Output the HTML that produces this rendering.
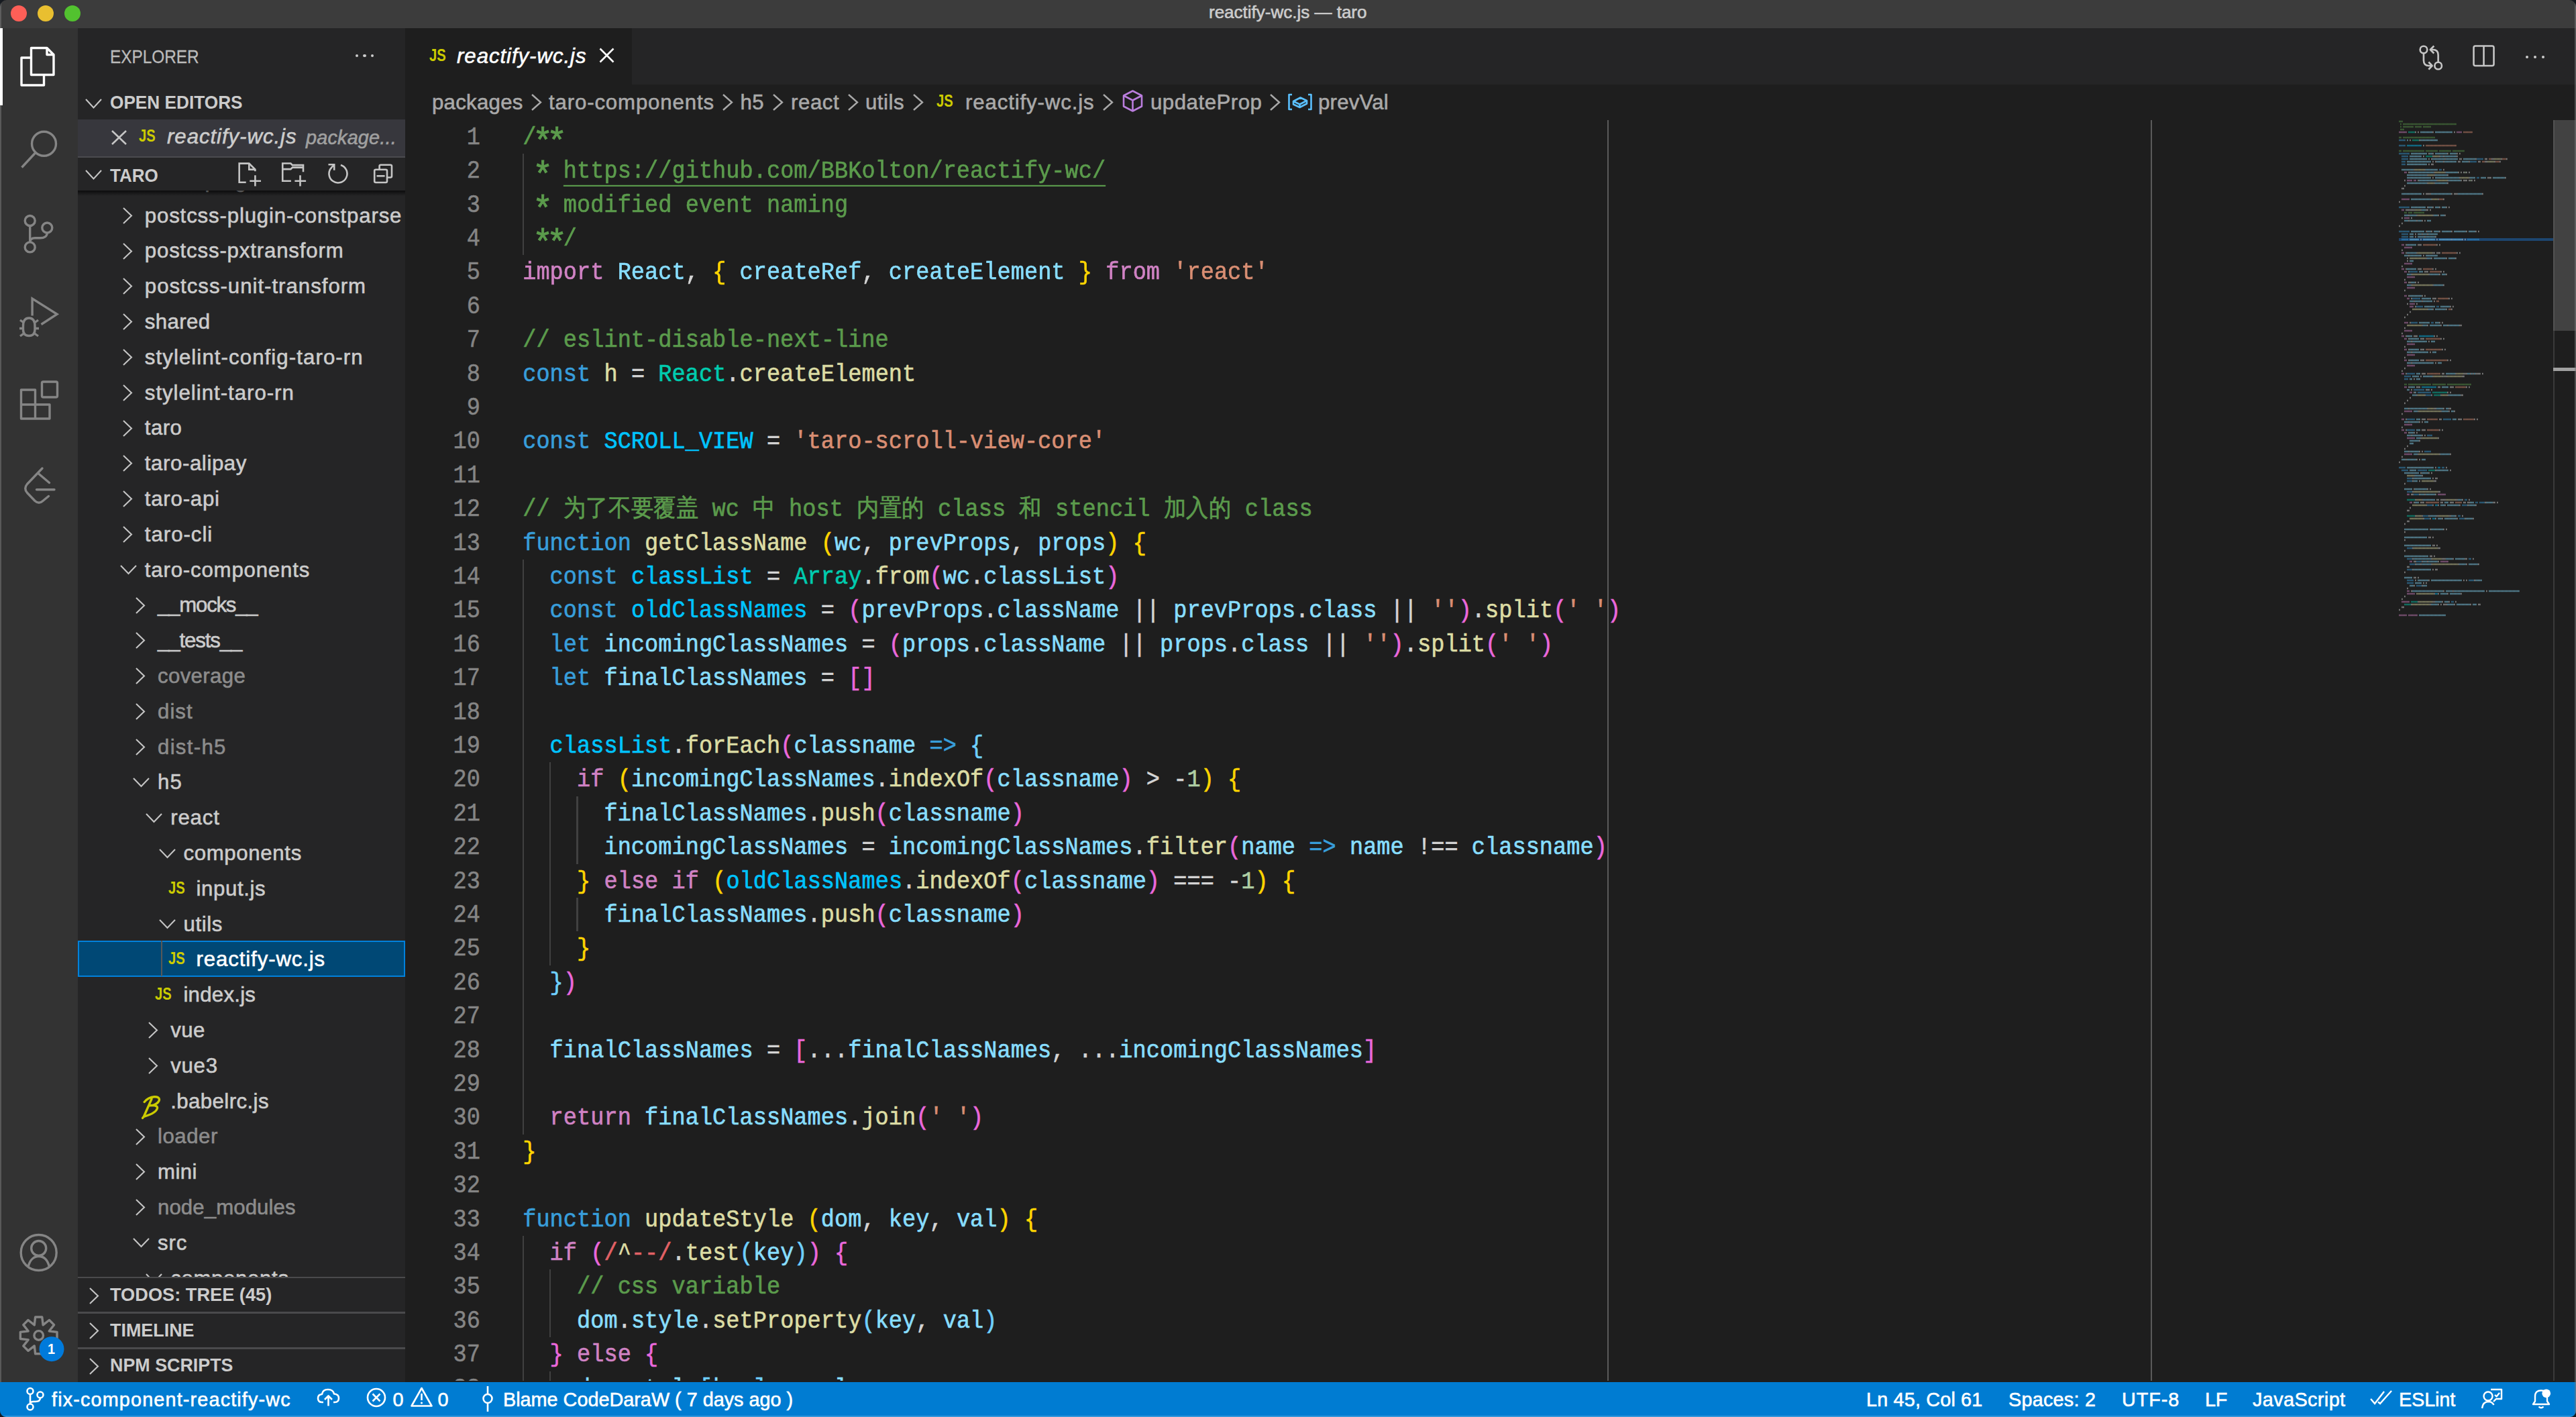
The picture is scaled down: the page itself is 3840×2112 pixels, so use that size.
<!DOCTYPE html>
<html><head><meta charset="utf-8"><style>
html,body{margin:0;padding:0;background:#161a20;}
#root{position:relative;width:3840px;height:2112px;overflow:hidden;background:#1e1e1e;font-family:'Liberation Sans', sans-serif;border-radius:10px 10px 9px 9px;}
</style></head><body><div id="root">
<div style="position:absolute;left:0.00px;top:0.00px;width:3840.00px;height:42.00px;background:#3c3c3c;"></div>
<div style="position:absolute;left:0.00px;top:42.00px;width:116.00px;height:2018.00px;background:#333333;"></div>
<div style="position:absolute;left:116.00px;top:42.00px;width:488.00px;height:2018.00px;background:#252526;"></div>
<div style="position:absolute;left:604.00px;top:42.00px;width:3236.00px;height:2018.00px;background:#1e1e1e;"></div>
<div style="position:absolute;left:0.00px;top:2060.00px;width:3840.00px;height:52.00px;background:#007cd2;"></div>
<div style="position:absolute;left:0.00px;top:0.00px;width:2.00px;height:2060.00px;background:rgba(120,120,120,0.55);"></div>
<div style="position:absolute;left:16px;top:8px;width:24px;height:24px;border-radius:50%;background:#fe5f57"></div>
<div style="position:absolute;left:56px;top:8px;width:24px;height:24px;border-radius:50%;background:#e9bf30"></div>
<div style="position:absolute;left:96px;top:8px;width:24px;height:24px;border-radius:50%;background:#52c22f"></div>
<div style="position:absolute;left:1802.00px;top:3.76px;font-family:'Liberation Sans', sans-serif;font-size:26px;line-height:29.05px;color:#cccccc;font-weight:normal;font-style:normal;letter-spacing:0.000px;white-space:pre;;-webkit-text-stroke:0.6px">reactify-wc.js — taro</div>
<div style="position:absolute;left:0.00px;top:42.00px;width:4.00px;height:115.00px;background:#ffffff;"></div>
<svg style="position:absolute;left:0.00px;top:42.00px;" width="116" height="2018" viewBox="0 42 116 2018">
<g fill="none" stroke="#ffffff" stroke-width="3.4" stroke-linejoin="round">
<path d="M46.5 71.5 H70 L80 81.5 V111.5 H46.5 Z"/><path d="M70 71.5 V81.5 H80"/>
<path d="M46.5 86 H32 V127 H65.5 V111.5"/></g>
<g fill="none" stroke="#858585" stroke-width="3.4">
<circle cx="65.5" cy="214.2" r="18"/><path d="M52.5 228 L32.5 249.5"/>
<circle cx="44.7" cy="329" r="7.5"/><circle cx="70.3" cy="339.5" r="7.5"/><circle cx="44.7" cy="368.4" r="7.5"/>
<path d="M44.7 336.5 V361"/><path d="M70.3 347 C70.3 352 66 354.8 60 354.8 H52 C47 354.8 44.7 357 44.7 361"/>
</g>
<g fill="none" stroke="#858585" stroke-width="3.4" stroke-linejoin="miter">
<path d="M48.1 470.5 V445 L85 468.2 L61.5 483.5"/>
<path d="M34.5 486 Q34.5 474 43.2 474 Q52 474 52 486 V491 Q52 500.5 43.2 500.5 Q34.5 500.5 34.5 491 Z"/>
<path d="M29 489.5 H34.5 M52 489.5 H58 M30 477 L35.5 481 M57 477 L51.5 481 M30 501 L35.5 497 M57 501 L51.5 497"/>
</g>
<g fill="none" stroke="#858585" stroke-width="3.4" stroke-linejoin="round">
<path d="M31.5 581 H52.5 V603 H74 V624 H31.5 Z"/><path d="M31.5 603 H52.5 V624"/>
<rect x="62.5" y="569" width="23" height="23" rx="2"/>
</g>
<g fill="none" stroke="#858585" stroke-width="3.4" stroke-linecap="round" stroke-linejoin="round">
<path d="M63 698 L40.5 721.5 Q35 728 40.5 734.5 L52 746.5 Q58 752 64 746.5 L72.5 739.5"/>
<path d="M57.5 706 L73.5 719.5"/><path d="M54.5 729.7 H81"/>
</g>
<g fill="none" stroke="#858585" stroke-width="3.4">
<circle cx="57.7" cy="1867" r="26.5"/><circle cx="57.7" cy="1860.5" r="11"/>
<path d="M42 1888 C45 1876 52 1872.5 57.7 1872.5 C63.5 1872.5 70.5 1876 73.5 1888"/>
</g>
<g fill="none" stroke="#858585" stroke-width="3.4" stroke-linejoin="round">
<polygon points="52.63,1963.07 62.77,1963.07 64.13,1974.88 73.45,1967.49 80.61,1974.65 73.22,1983.97 85.03,1985.33 85.03,1995.47 73.22,1996.83 80.61,2006.15 73.45,2013.31 64.13,2005.92 62.77,2017.73 52.63,2017.73 51.27,2005.92 41.95,2013.31 34.79,2006.15 42.18,1996.83 30.37,1995.47 30.37,1985.33 42.18,1983.97 34.79,1974.65 41.95,1967.49 51.27,1974.88"/><circle cx="57.7" cy="1990.4" r="6.8"/></g>
<circle cx="77" cy="2010.7" r="18.5" fill="#007adb"/></svg>
<div style="position:absolute;left:70.50px;top:1998.58px;font-family:'Liberation Sans', sans-serif;font-size:22px;line-height:24.58px;color:#ffffff;font-weight:bold;font-style:normal;letter-spacing:0.000px;white-space:pre;transform:scaleX(0.9);transform-origin:left">1</div>
<div style="position:absolute;left:164.00px;top:68.85px;font-family:'Liberation Sans', sans-serif;font-size:28px;line-height:31.28px;color:#bbbbbb;font-weight:normal;font-style:normal;letter-spacing:0.000px;white-space:pre;transform:scaleX(0.87);transform-origin:left;-webkit-text-stroke:0.3px">EXPLORER</div>
<div style="position:absolute;left:529.5px;top:80.5px;width:4.8px;height:4.8px;border-radius:50%;background:#cccccc"></div>
<div style="position:absolute;left:541.0px;top:80.5px;width:4.8px;height:4.8px;border-radius:50%;background:#cccccc"></div>
<div style="position:absolute;left:552.5px;top:80.5px;width:4.8px;height:4.8px;border-radius:50%;background:#cccccc"></div>
<svg style="position:absolute;left:126.00px;top:145.50px;" width="27" height="16.5" viewBox="0 0 27 16.5"><path d="M2 2 L13.5 14.5 L25 2" fill="none" stroke="#c5c5c5" stroke-width="2.1"/></svg>
<div style="position:absolute;left:164.00px;top:136.95px;font-family:'Liberation Sans', sans-serif;font-size:28px;line-height:31.28px;color:#cccccc;font-weight:bold;font-style:normal;letter-spacing:0.000px;white-space:pre;transform:scaleX(0.936);transform-origin:left">OPEN EDITORS</div>
<div style="position:absolute;left:116.00px;top:178.00px;width:488.00px;height:55.00px;background:#37373d;"></div>
<div style="position:absolute;left:116.00px;top:232.50px;width:488.00px;height:2.00px;background:#4b4b4f;"></div>
<svg style="position:absolute;left:165.00px;top:193.00px;" width="25" height="24" viewBox="0 0 25 24"><path d="M2 2 L23 22 M23 2 L2 22" fill="none" stroke="#c5c5c5" stroke-width="2.6"/></svg>
<div style="position:absolute;left:207.00px;top:187.99px;font-family:'Liberation Sans', sans-serif;font-size:25.970000000000002px;line-height:29.01px;color:#cbcb00;font-weight:bold;font-style:normal;letter-spacing:0.000px;white-space:pre;transform:scaleX(0.78);transform-origin:left">JS</div>
<div style="position:absolute;left:249.00px;top:186.75px;font-family:'Liberation Sans', sans-serif;font-size:31.2px;line-height:34.86px;color:#cccccc;font-weight:normal;font-style:italic;letter-spacing:0.950px;white-space:pre;;-webkit-text-stroke:0.6px">reactify-wc.js</div>
<div style="position:absolute;left:456.00px;top:188.93px;font-family:'Liberation Sans', sans-serif;font-size:28.8px;line-height:32.18px;color:#a0a0a0;font-weight:normal;font-style:italic;letter-spacing:0.200px;white-space:pre;;-webkit-text-stroke:0.6px">package...</div>
<div style="position:absolute;left:116.00px;top:234.50px;width:488.00px;height:49.50px;background:#252526;"></div>
<svg style="position:absolute;left:126.00px;top:252.00px;" width="27" height="16.5" viewBox="0 0 27 16.5"><path d="M2 2 L13.5 14.5 L25 2" fill="none" stroke="#c5c5c5" stroke-width="2.1"/></svg>
<div style="position:absolute;left:164.00px;top:245.65px;font-family:'Liberation Sans', sans-serif;font-size:28px;line-height:31.28px;color:#cccccc;font-weight:bold;font-style:normal;letter-spacing:0.000px;white-space:pre;transform:scaleX(0.93);transform-origin:left">TARO</div>
<svg style="position:absolute;left:350.00px;top:238.00px;" width="44" height="44" viewBox="0 0 44 44"><g fill="none" stroke="#c5c5c5" stroke-width="2.6" stroke-linejoin="miter">
<path d="M16.7 33.8 H6.65 V5.6 H21.3 L30.4 14.6 V17.2"/><path d="M21.3 5.6 V14.6 H30.4"/><path d="M22.3 31.8 H39 M30.4 23.2 V39.4"/></g></svg>
<svg style="position:absolute;left:416.00px;top:238.00px;" width="44" height="44" viewBox="0 0 44 44"><g fill="none" stroke="#c5c5c5" stroke-width="2.6" stroke-linejoin="miter">
<path d="M17.9 31.8 H5.25 V5.57 H17.4 L19.9 8.1 H36 V18.2"/><path d="M5.25 14.15 H17.4 L19.9 11.63 H36"/><path d="M23.4 31.8 H40.1 M31.5 23.2 V39.4"/></g></svg>
<svg style="position:absolute;left:484.00px;top:238.00px;" width="40" height="40" viewBox="0 0 40 40"><g fill="none" stroke="#c5c5c5" stroke-width="2.6" stroke-linejoin="miter">
<path d="M23.9 8 A13.5 13.5 0 1 1 10.6 11.2 L14.2 7.3"/><path d="M5.5 7.3 H14.2 V15.8"/></g></svg>
<svg style="position:absolute;left:552.00px;top:238.00px;" width="40" height="40" viewBox="0 0 40 40"><g fill="none" stroke="#c5c5c5" stroke-width="2.6" stroke-linejoin="round">
<rect x="6.2" y="14.7" width="18.8" height="19.3" rx="2"/><path d="M13.6 14.7 V9.7 Q13.6 7.7 15.6 7.7 H30 Q32 7.7 32 9.7 V24.5 Q32 26.5 30 26.5 H25"/><path d="M9.5 24.3 H21.6"/></g></svg>
<div style="position:absolute;left:116px;top:284px;width:488px;height:1618.6px;overflow:hidden">
<svg style="position:absolute;left:66.00px;top:-29.10px;" width="17" height="27" viewBox="0 0 17 27"><path d="M2 2 L14 13.5 L2 25" fill="none" stroke="#c5c5c5" stroke-width="2.1"/></svg>
<div style="position:absolute;left:99.80px;top:-32.15px;font-family:'Liberation Sans', sans-serif;font-size:31.2px;line-height:34.86px;color:#cccccc;font-weight:normal;font-style:normal;letter-spacing:0.941px;white-space:pre;;-webkit-text-stroke:0.6px">eslint-plugin-taro</div>
<svg style="position:absolute;left:66.00px;top:23.70px;" width="17" height="27" viewBox="0 0 17 27"><path d="M2 2 L14 13.5 L2 25" fill="none" stroke="#c5c5c5" stroke-width="2.1"/></svg>
<div style="position:absolute;left:99.80px;top:20.65px;font-family:'Liberation Sans', sans-serif;font-size:31.2px;line-height:34.86px;color:#cccccc;font-weight:normal;font-style:normal;letter-spacing:0.848px;white-space:pre;;-webkit-text-stroke:0.6px">postcss-plugin-constparse</div>
<svg style="position:absolute;left:66.00px;top:76.50px;" width="17" height="27" viewBox="0 0 17 27"><path d="M2 2 L14 13.5 L2 25" fill="none" stroke="#c5c5c5" stroke-width="2.1"/></svg>
<div style="position:absolute;left:99.80px;top:73.45px;font-family:'Liberation Sans', sans-serif;font-size:31.2px;line-height:34.86px;color:#cccccc;font-weight:normal;font-style:normal;letter-spacing:0.839px;white-space:pre;;-webkit-text-stroke:0.6px">postcss-pxtransform</div>
<svg style="position:absolute;left:66.00px;top:129.30px;" width="17" height="27" viewBox="0 0 17 27"><path d="M2 2 L14 13.5 L2 25" fill="none" stroke="#c5c5c5" stroke-width="2.1"/></svg>
<div style="position:absolute;left:99.80px;top:126.25px;font-family:'Liberation Sans', sans-serif;font-size:31.2px;line-height:34.86px;color:#cccccc;font-weight:normal;font-style:normal;letter-spacing:0.991px;white-space:pre;;-webkit-text-stroke:0.6px">postcss-unit-transform</div>
<svg style="position:absolute;left:66.00px;top:182.10px;" width="17" height="27" viewBox="0 0 17 27"><path d="M2 2 L14 13.5 L2 25" fill="none" stroke="#c5c5c5" stroke-width="2.1"/></svg>
<div style="position:absolute;left:99.80px;top:179.05px;font-family:'Liberation Sans', sans-serif;font-size:31.2px;line-height:34.86px;color:#cccccc;font-weight:normal;font-style:normal;letter-spacing:0.371px;white-space:pre;;-webkit-text-stroke:0.6px">shared</div>
<svg style="position:absolute;left:66.00px;top:234.90px;" width="17" height="27" viewBox="0 0 17 27"><path d="M2 2 L14 13.5 L2 25" fill="none" stroke="#c5c5c5" stroke-width="2.1"/></svg>
<div style="position:absolute;left:99.80px;top:231.85px;font-family:'Liberation Sans', sans-serif;font-size:31.2px;line-height:34.86px;color:#cccccc;font-weight:normal;font-style:normal;letter-spacing:1.085px;white-space:pre;;-webkit-text-stroke:0.6px">stylelint-config-taro-rn</div>
<svg style="position:absolute;left:66.00px;top:287.70px;" width="17" height="27" viewBox="0 0 17 27"><path d="M2 2 L14 13.5 L2 25" fill="none" stroke="#c5c5c5" stroke-width="2.1"/></svg>
<div style="position:absolute;left:99.80px;top:284.65px;font-family:'Liberation Sans', sans-serif;font-size:31.2px;line-height:34.86px;color:#cccccc;font-weight:normal;font-style:normal;letter-spacing:0.985px;white-space:pre;;-webkit-text-stroke:0.6px">stylelint-taro-rn</div>
<svg style="position:absolute;left:66.00px;top:340.50px;" width="17" height="27" viewBox="0 0 17 27"><path d="M2 2 L14 13.5 L2 25" fill="none" stroke="#c5c5c5" stroke-width="2.1"/></svg>
<div style="position:absolute;left:99.80px;top:337.45px;font-family:'Liberation Sans', sans-serif;font-size:31.2px;line-height:34.86px;color:#cccccc;font-weight:normal;font-style:normal;letter-spacing:0.438px;white-space:pre;;-webkit-text-stroke:0.6px">taro</div>
<svg style="position:absolute;left:66.00px;top:393.30px;" width="17" height="27" viewBox="0 0 17 27"><path d="M2 2 L14 13.5 L2 25" fill="none" stroke="#c5c5c5" stroke-width="2.1"/></svg>
<div style="position:absolute;left:99.80px;top:390.25px;font-family:'Liberation Sans', sans-serif;font-size:31.2px;line-height:34.86px;color:#cccccc;font-weight:normal;font-style:normal;letter-spacing:0.598px;white-space:pre;;-webkit-text-stroke:0.6px">taro-alipay</div>
<svg style="position:absolute;left:66.00px;top:446.10px;" width="17" height="27" viewBox="0 0 17 27"><path d="M2 2 L14 13.5 L2 25" fill="none" stroke="#c5c5c5" stroke-width="2.1"/></svg>
<div style="position:absolute;left:99.80px;top:443.05px;font-family:'Liberation Sans', sans-serif;font-size:31.2px;line-height:34.86px;color:#cccccc;font-weight:normal;font-style:normal;letter-spacing:0.781px;white-space:pre;;-webkit-text-stroke:0.6px">taro-api</div>
<svg style="position:absolute;left:66.00px;top:498.90px;" width="17" height="27" viewBox="0 0 17 27"><path d="M2 2 L14 13.5 L2 25" fill="none" stroke="#c5c5c5" stroke-width="2.1"/></svg>
<div style="position:absolute;left:99.80px;top:495.85px;font-family:'Liberation Sans', sans-serif;font-size:31.2px;line-height:34.86px;color:#cccccc;font-weight:normal;font-style:normal;letter-spacing:0.978px;white-space:pre;;-webkit-text-stroke:0.6px">taro-cli</div>
<svg style="position:absolute;left:62.00px;top:557.20px;" width="27" height="17" viewBox="0 0 27 17"><path d="M2 2 L13.5 14 L25 2" fill="none" stroke="#c5c5c5" stroke-width="2.1"/></svg>
<div style="position:absolute;left:99.80px;top:548.65px;font-family:'Liberation Sans', sans-serif;font-size:31.2px;line-height:34.86px;color:#cccccc;font-weight:normal;font-style:normal;letter-spacing:0.818px;white-space:pre;;-webkit-text-stroke:0.6px">taro-components</div>
<svg style="position:absolute;left:85.20px;top:604.50px;" width="17" height="27" viewBox="0 0 17 27"><path d="M2 2 L14 13.5 L2 25" fill="none" stroke="#c5c5c5" stroke-width="2.1"/></svg>
<div style="position:absolute;left:119.00px;top:601.45px;font-family:'Liberation Sans', sans-serif;font-size:31.2px;line-height:34.86px;color:#cccccc;font-weight:normal;font-style:normal;letter-spacing:-1.222px;white-space:pre;;-webkit-text-stroke:0.6px">__mocks__</div>
<svg style="position:absolute;left:85.20px;top:657.30px;" width="17" height="27" viewBox="0 0 17 27"><path d="M2 2 L14 13.5 L2 25" fill="none" stroke="#c5c5c5" stroke-width="2.1"/></svg>
<div style="position:absolute;left:119.00px;top:654.25px;font-family:'Liberation Sans', sans-serif;font-size:31.2px;line-height:34.86px;color:#cccccc;font-weight:normal;font-style:normal;letter-spacing:-1.117px;white-space:pre;;-webkit-text-stroke:0.6px">__tests__</div>
<svg style="position:absolute;left:85.20px;top:710.10px;" width="17" height="27" viewBox="0 0 17 27"><path d="M2 2 L14 13.5 L2 25" fill="none" stroke="#c5c5c5" stroke-width="2.1"/></svg>
<div style="position:absolute;left:119.00px;top:707.05px;font-family:'Liberation Sans', sans-serif;font-size:31.2px;line-height:34.86px;color:#8c8c8c;font-weight:normal;font-style:normal;letter-spacing:0.348px;white-space:pre;;-webkit-text-stroke:0.6px">coverage</div>
<svg style="position:absolute;left:85.20px;top:762.90px;" width="17" height="27" viewBox="0 0 17 27"><path d="M2 2 L14 13.5 L2 25" fill="none" stroke="#c5c5c5" stroke-width="2.1"/></svg>
<div style="position:absolute;left:119.00px;top:759.85px;font-family:'Liberation Sans', sans-serif;font-size:31.2px;line-height:34.86px;color:#8c8c8c;font-weight:normal;font-style:normal;letter-spacing:1.038px;white-space:pre;;-webkit-text-stroke:0.6px">dist</div>
<svg style="position:absolute;left:85.20px;top:815.70px;" width="17" height="27" viewBox="0 0 17 27"><path d="M2 2 L14 13.5 L2 25" fill="none" stroke="#c5c5c5" stroke-width="2.1"/></svg>
<div style="position:absolute;left:119.00px;top:812.65px;font-family:'Liberation Sans', sans-serif;font-size:31.2px;line-height:34.86px;color:#8c8c8c;font-weight:normal;font-style:normal;letter-spacing:1.299px;white-space:pre;;-webkit-text-stroke:0.6px">dist-h5</div>
<svg style="position:absolute;left:81.20px;top:874.00px;" width="27" height="17" viewBox="0 0 27 17"><path d="M2 2 L13.5 14 L25 2" fill="none" stroke="#c5c5c5" stroke-width="2.1"/></svg>
<div style="position:absolute;left:119.00px;top:865.45px;font-family:'Liberation Sans', sans-serif;font-size:31.2px;line-height:34.86px;color:#cccccc;font-weight:normal;font-style:normal;letter-spacing:1.148px;white-space:pre;;-webkit-text-stroke:0.6px">h5</div>
<svg style="position:absolute;left:100.40px;top:926.80px;" width="27" height="17" viewBox="0 0 27 17"><path d="M2 2 L13.5 14 L25 2" fill="none" stroke="#c5c5c5" stroke-width="2.1"/></svg>
<div style="position:absolute;left:138.20px;top:918.25px;font-family:'Liberation Sans', sans-serif;font-size:31.2px;line-height:34.86px;color:#cccccc;font-weight:normal;font-style:normal;letter-spacing:0.831px;white-space:pre;;-webkit-text-stroke:0.6px">react</div>
<svg style="position:absolute;left:119.60px;top:979.60px;" width="27" height="17" viewBox="0 0 27 17"><path d="M2 2 L13.5 14 L25 2" fill="none" stroke="#c5c5c5" stroke-width="2.1"/></svg>
<div style="position:absolute;left:157.40px;top:971.05px;font-family:'Liberation Sans', sans-serif;font-size:31.2px;line-height:34.86px;color:#cccccc;font-weight:normal;font-style:normal;letter-spacing:0.659px;white-space:pre;;-webkit-text-stroke:0.6px">components</div>
<div style="position:absolute;left:134.60px;top:1024.86px;font-family:'Liberation Sans', sans-serif;font-size:26px;line-height:29.05px;color:#cbcb00;font-weight:bold;font-style:normal;letter-spacing:0.000px;white-space:pre;transform:scaleX(0.78);transform-origin:left">JS</div>
<div style="position:absolute;left:176.60px;top:1023.85px;font-family:'Liberation Sans', sans-serif;font-size:31.2px;line-height:34.86px;color:#cccccc;font-weight:normal;font-style:normal;letter-spacing:0.596px;white-space:pre;;-webkit-text-stroke:0.6px">input.js</div>
<svg style="position:absolute;left:119.60px;top:1085.20px;" width="27" height="17" viewBox="0 0 27 17"><path d="M2 2 L13.5 14 L25 2" fill="none" stroke="#c5c5c5" stroke-width="2.1"/></svg>
<div style="position:absolute;left:157.40px;top:1076.65px;font-family:'Liberation Sans', sans-serif;font-size:31.2px;line-height:34.86px;color:#cccccc;font-weight:normal;font-style:normal;letter-spacing:0.646px;white-space:pre;;-webkit-text-stroke:0.6px">utils</div>
<div style="position:absolute;left:0px;top:1118.00px;width:488px;height:53.80px;box-sizing:border-box;background:#004875;border:2.4px solid #0081db"></div>
<div style="position:absolute;left:134.60px;top:1130.46px;font-family:'Liberation Sans', sans-serif;font-size:26px;line-height:29.05px;color:#cbcb00;font-weight:bold;font-style:normal;letter-spacing:0.000px;white-space:pre;transform:scaleX(0.78);transform-origin:left">JS</div>
<div style="position:absolute;left:176.60px;top:1129.45px;font-family:'Liberation Sans', sans-serif;font-size:31.2px;line-height:34.86px;color:#ffffff;font-weight:normal;font-style:normal;letter-spacing:0.877px;white-space:pre;;-webkit-text-stroke:0.6px">reactify-wc.js</div>
<div style="position:absolute;left:115.40px;top:1183.26px;font-family:'Liberation Sans', sans-serif;font-size:26px;line-height:29.05px;color:#cbcb00;font-weight:bold;font-style:normal;letter-spacing:0.000px;white-space:pre;transform:scaleX(0.78);transform-origin:left">JS</div>
<div style="position:absolute;left:157.40px;top:1182.25px;font-family:'Liberation Sans', sans-serif;font-size:31.2px;line-height:34.86px;color:#cccccc;font-weight:normal;font-style:normal;letter-spacing:0.256px;white-space:pre;;-webkit-text-stroke:0.6px">index.js</div>
<svg style="position:absolute;left:104.40px;top:1238.10px;" width="17" height="27" viewBox="0 0 17 27"><path d="M2 2 L14 13.5 L2 25" fill="none" stroke="#c5c5c5" stroke-width="2.1"/></svg>
<div style="position:absolute;left:138.20px;top:1235.05px;font-family:'Liberation Sans', sans-serif;font-size:31.2px;line-height:34.86px;color:#cccccc;font-weight:normal;font-style:normal;letter-spacing:0.401px;white-space:pre;;-webkit-text-stroke:0.6px">vue</div>
<svg style="position:absolute;left:104.40px;top:1290.90px;" width="17" height="27" viewBox="0 0 17 27"><path d="M2 2 L14 13.5 L2 25" fill="none" stroke="#c5c5c5" stroke-width="2.1"/></svg>
<div style="position:absolute;left:138.20px;top:1287.85px;font-family:'Liberation Sans', sans-serif;font-size:31.2px;line-height:34.86px;color:#cccccc;font-weight:normal;font-style:normal;letter-spacing:0.740px;white-space:pre;;-webkit-text-stroke:0.6px">vue3</div>
<svg style="position:absolute;left:95.00px;top:1349.00px;" width="30" height="36" viewBox="0 0 30 36"><g fill="none" stroke="#cbcb00" stroke-width="3.4" stroke-linecap="round" stroke-linejoin="round"><path d="M4.2 9.5 Q10 2.5 19 1.8 Q26.5 1.5 26.5 6 Q26 11 17 14.5 Q24 15 23.5 18.5 Q22 26 4 31"/><path d="M15 5 L3.5 31 L1.5 33.5"/><path d="M12.5 14.8 L17 14.5"/></g></svg>
<div style="position:absolute;left:138.20px;top:1340.65px;font-family:'Liberation Sans', sans-serif;font-size:31.2px;line-height:34.86px;color:#cccccc;font-weight:normal;font-style:normal;letter-spacing:0.422px;white-space:pre;;-webkit-text-stroke:0.6px">.babelrc.js</div>
<svg style="position:absolute;left:85.20px;top:1396.50px;" width="17" height="27" viewBox="0 0 17 27"><path d="M2 2 L14 13.5 L2 25" fill="none" stroke="#c5c5c5" stroke-width="2.1"/></svg>
<div style="position:absolute;left:119.00px;top:1393.45px;font-family:'Liberation Sans', sans-serif;font-size:31.2px;line-height:34.86px;color:#8c8c8c;font-weight:normal;font-style:normal;letter-spacing:0.533px;white-space:pre;;-webkit-text-stroke:0.6px">loader</div>
<svg style="position:absolute;left:85.20px;top:1449.30px;" width="17" height="27" viewBox="0 0 17 27"><path d="M2 2 L14 13.5 L2 25" fill="none" stroke="#c5c5c5" stroke-width="2.1"/></svg>
<div style="position:absolute;left:119.00px;top:1446.25px;font-family:'Liberation Sans', sans-serif;font-size:31.2px;line-height:34.86px;color:#cccccc;font-weight:normal;font-style:normal;letter-spacing:0.428px;white-space:pre;;-webkit-text-stroke:0.6px">mini</div>
<svg style="position:absolute;left:85.20px;top:1502.10px;" width="17" height="27" viewBox="0 0 17 27"><path d="M2 2 L14 13.5 L2 25" fill="none" stroke="#c5c5c5" stroke-width="2.1"/></svg>
<div style="position:absolute;left:119.00px;top:1499.05px;font-family:'Liberation Sans', sans-serif;font-size:31.2px;line-height:34.86px;color:#8c8c8c;font-weight:normal;font-style:normal;letter-spacing:0.083px;white-space:pre;;-webkit-text-stroke:0.6px">node_modules</div>
<svg style="position:absolute;left:81.20px;top:1560.40px;" width="27" height="17" viewBox="0 0 27 17"><path d="M2 2 L13.5 14 L25 2" fill="none" stroke="#c5c5c5" stroke-width="2.1"/></svg>
<div style="position:absolute;left:119.00px;top:1551.85px;font-family:'Liberation Sans', sans-serif;font-size:31.2px;line-height:34.86px;color:#cccccc;font-weight:normal;font-style:normal;letter-spacing:0.874px;white-space:pre;;-webkit-text-stroke:0.6px">src</div>
<svg style="position:absolute;left:100.40px;top:1613.20px;" width="27" height="17" viewBox="0 0 27 17"><path d="M2 2 L13.5 14 L25 2" fill="none" stroke="#c5c5c5" stroke-width="2.1"/></svg>
<div style="position:absolute;left:138.20px;top:1604.65px;font-family:'Liberation Sans', sans-serif;font-size:31.2px;line-height:34.86px;color:#cccccc;font-weight:normal;font-style:normal;letter-spacing:0.659px;white-space:pre;;-webkit-text-stroke:0.6px">components</div>
<div style="position:absolute;left:124.00px;top:1118.00px;width:2.00px;height:52.80px;background:#585858;"></div>
</div>
<div style="position:absolute;left:116px;top:284px;width:488px;height:8px;background:linear-gradient(#000000aa,#00000000)"></div>
<div style="position:absolute;left:116.00px;top:1902.60px;width:488.00px;height:52.80px;background:#252526;"></div>
<div style="position:absolute;left:116.00px;top:1902.60px;width:488.00px;height:2.40px;background:#4a4a4c;"></div>
<svg style="position:absolute;left:132.00px;top:1917.60px;" width="17" height="27" viewBox="0 0 17 27"><path d="M2 2 L14 13.5 L2 25" fill="none" stroke="#c5c5c5" stroke-width="2.1"/></svg>
<div style="position:absolute;left:164.00px;top:1913.75px;font-family:'Liberation Sans', sans-serif;font-size:28px;line-height:31.28px;color:#cccccc;font-weight:bold;font-style:normal;letter-spacing:0.000px;white-space:pre;transform:scaleX(0.971);transform-origin:left">TODOS: TREE (45)</div>
<div style="position:absolute;left:116.00px;top:1955.40px;width:488.00px;height:52.80px;background:#252526;"></div>
<div style="position:absolute;left:116.00px;top:1955.40px;width:488.00px;height:2.40px;background:#4a4a4c;"></div>
<svg style="position:absolute;left:132.00px;top:1970.40px;" width="17" height="27" viewBox="0 0 17 27"><path d="M2 2 L14 13.5 L2 25" fill="none" stroke="#c5c5c5" stroke-width="2.1"/></svg>
<div style="position:absolute;left:164.00px;top:1966.55px;font-family:'Liberation Sans', sans-serif;font-size:28px;line-height:31.28px;color:#cccccc;font-weight:bold;font-style:normal;letter-spacing:0.000px;white-space:pre;transform:scaleX(0.961);transform-origin:left">TIMELINE</div>
<div style="position:absolute;left:116.00px;top:2008.20px;width:488.00px;height:51.80px;background:#252526;"></div>
<div style="position:absolute;left:116.00px;top:2008.20px;width:488.00px;height:2.40px;background:#4a4a4c;"></div>
<svg style="position:absolute;left:132.00px;top:2023.20px;" width="17" height="27" viewBox="0 0 17 27"><path d="M2 2 L14 13.5 L2 25" fill="none" stroke="#c5c5c5" stroke-width="2.1"/></svg>
<div style="position:absolute;left:164.00px;top:2019.35px;font-family:'Liberation Sans', sans-serif;font-size:28px;line-height:31.28px;color:#cccccc;font-weight:bold;font-style:normal;letter-spacing:0.000px;white-space:pre;transform:scaleX(0.959);transform-origin:left">NPM SCRIPTS</div>
<div style="position:absolute;left:604.00px;top:42.00px;width:3236.00px;height:84.00px;background:#252526;"></div>
<div style="position:absolute;left:604.00px;top:42.00px;width:338.00px;height:84.00px;background:#1e1e1e;"></div>
<div style="position:absolute;left:639.50px;top:67.99px;font-family:'Liberation Sans', sans-serif;font-size:25.970000000000002px;line-height:29.01px;color:#cbcb00;font-weight:bold;font-style:normal;letter-spacing:0.000px;white-space:pre;transform:scaleX(0.78);transform-origin:left">JS</div>
<div style="position:absolute;left:681.00px;top:67.05px;font-family:'Liberation Sans', sans-serif;font-size:31.2px;line-height:34.86px;color:#ffffff;font-weight:normal;font-style:italic;letter-spacing:0.950px;white-space:pre;;-webkit-text-stroke:0.6px">reactify-wc.js</div>
<svg style="position:absolute;left:892.00px;top:70.00px;" width="25" height="25" viewBox="0 0 25 25"><path d="M2.5 2.5 L22.5 22.5 M22.5 2.5 L2.5 22.5" fill="none" stroke="#ffffff" stroke-width="2.6"/></svg>
<svg style="position:absolute;left:3600.00px;top:62.00px;" width="50" height="50" viewBox="0 0 50 50"><g fill="none" stroke="#c5c5c5" stroke-width="2.6" stroke-linejoin="round">
<circle cx="12.9" cy="12" r="5.3"/><circle cx="34.6" cy="36" r="5.3"/>
<path d="M12.9 17.3 V28 Q12.9 36 20.9 36 H25"/><path d="M20.3 30.5 L25.6 36 L20.3 41.5"/>
<path d="M34.6 30.7 V20 Q34.6 12 26.6 12 H23"/><path d="M28.3 6.5 L22.8 12 L28.3 17.5"/></g></svg>
<svg style="position:absolute;left:3680.00px;top:62.00px;" width="44" height="44" viewBox="0 0 44 44"><g fill="none" stroke="#c5c5c5" stroke-width="2.6"><rect x="7.5" y="6.5" width="30" height="29.5" rx="2.5"/><path d="M22.5 6.5 V36"/></g></svg>
<div style="position:absolute;left:3764.5px;top:82.5px;width:4.8px;height:4.8px;border-radius:50%;background:#cccccc"></div>
<div style="position:absolute;left:3776.5px;top:82.5px;width:4.8px;height:4.8px;border-radius:50%;background:#cccccc"></div>
<div style="position:absolute;left:3788.5px;top:82.5px;width:4.8px;height:4.8px;border-radius:50%;background:#cccccc"></div>
<div style="position:absolute;left:644.00px;top:135.65px;font-family:'Liberation Sans', sans-serif;font-size:31.2px;line-height:34.86px;color:#a9a9a9;font-weight:normal;font-style:normal;letter-spacing:0.273px;white-space:pre;;-webkit-text-stroke:0.6px">packages</div>
<div style="position:absolute;left:818.00px;top:135.65px;font-family:'Liberation Sans', sans-serif;font-size:31.2px;line-height:34.86px;color:#a9a9a9;font-weight:normal;font-style:normal;letter-spacing:0.858px;white-space:pre;;-webkit-text-stroke:0.6px">taro-components</div>
<div style="position:absolute;left:1103.50px;top:135.65px;font-family:'Liberation Sans', sans-serif;font-size:31.2px;line-height:34.86px;color:#a9a9a9;font-weight:normal;font-style:normal;letter-spacing:0.448px;white-space:pre;;-webkit-text-stroke:0.6px">h5</div>
<div style="position:absolute;left:1179.00px;top:135.65px;font-family:'Liberation Sans', sans-serif;font-size:31.2px;line-height:34.86px;color:#a9a9a9;font-weight:normal;font-style:normal;letter-spacing:0.591px;white-space:pre;;-webkit-text-stroke:0.6px">react</div>
<div style="position:absolute;left:1290.00px;top:135.65px;font-family:'Liberation Sans', sans-serif;font-size:31.2px;line-height:34.86px;color:#a9a9a9;font-weight:normal;font-style:normal;letter-spacing:0.506px;white-space:pre;;-webkit-text-stroke:0.6px">utils</div>
<svg style="position:absolute;left:790.50px;top:139.00px;" width="18" height="28" viewBox="0 0 18 28"><path d="M2 2 L15 13.5 L2 25" fill="none" stroke="#a9a9a9" stroke-width="2.4"/></svg>
<svg style="position:absolute;left:1076.00px;top:139.00px;" width="18" height="28" viewBox="0 0 18 28"><path d="M2 2 L15 13.5 L2 25" fill="none" stroke="#a9a9a9" stroke-width="2.4"/></svg>
<svg style="position:absolute;left:1150.50px;top:139.00px;" width="18" height="28" viewBox="0 0 18 28"><path d="M2 2 L15 13.5 L2 25" fill="none" stroke="#a9a9a9" stroke-width="2.4"/></svg>
<svg style="position:absolute;left:1262.50px;top:139.00px;" width="18" height="28" viewBox="0 0 18 28"><path d="M2 2 L15 13.5 L2 25" fill="none" stroke="#a9a9a9" stroke-width="2.4"/></svg>
<svg style="position:absolute;left:1360.00px;top:139.00px;" width="18" height="28" viewBox="0 0 18 28"><path d="M2 2 L15 13.5 L2 25" fill="none" stroke="#a9a9a9" stroke-width="2.4"/></svg>
<div style="position:absolute;left:1396.00px;top:136.49px;font-family:'Liberation Sans', sans-serif;font-size:25.970000000000002px;line-height:29.01px;color:#cbcb00;font-weight:bold;font-style:normal;letter-spacing:0.000px;white-space:pre;transform:scaleX(0.78);transform-origin:left">JS</div>
<div style="position:absolute;left:1439.00px;top:135.65px;font-family:'Liberation Sans', sans-serif;font-size:31.2px;line-height:34.86px;color:#a9a9a9;font-weight:normal;font-style:normal;letter-spacing:0.877px;white-space:pre;;-webkit-text-stroke:0.6px">reactify-wc.js</div>
<svg style="position:absolute;left:1643.00px;top:139.00px;" width="18" height="28" viewBox="0 0 18 28"><path d="M2 2 L15 13.5 L2 25" fill="none" stroke="#a9a9a9" stroke-width="2.4"/></svg>
<svg style="position:absolute;left:1672.00px;top:133.00px;" width="33" height="35" viewBox="0 0 33 35"><g fill="none" stroke="#ba7ddd" stroke-width="2.6" stroke-linejoin="round">
<path d="M16.5 2.5 L30 9.5 V25.5 L16.5 32.5 L3 25.5 V9.5 Z"/><path d="M3 9.5 L16.5 16.5 L30 9.5 M16.5 16.5 V32.5"/></g></svg>
<div style="position:absolute;left:1715.00px;top:135.65px;font-family:'Liberation Sans', sans-serif;font-size:31.2px;line-height:34.86px;color:#a9a9a9;font-weight:normal;font-style:normal;letter-spacing:0.522px;white-space:pre;;-webkit-text-stroke:0.6px">updateProp</div>
<svg style="position:absolute;left:1892.00px;top:139.00px;" width="18" height="28" viewBox="0 0 18 28"><path d="M2 2 L15 13.5 L2 25" fill="none" stroke="#a9a9a9" stroke-width="2.4"/></svg>
<svg style="position:absolute;left:1919.00px;top:138.00px;" width="38" height="28" viewBox="0 0 38 28"><g fill="none" stroke="#5ac0ff" stroke-width="2.6" stroke-linejoin="round">
<path d="M7 3 H2.5 V25 H7 M31 3 H35.5 V25 H31"/>
<path d="M9 13 L19.5 7.5 L29 12 V16.5 L18.5 22 L9 17.5 Z M9 13 L18.5 17.5 L29 12 M18.5 17.5 V22"/></g></svg>
<div style="position:absolute;left:1965.00px;top:135.65px;font-family:'Liberation Sans', sans-serif;font-size:31.2px;line-height:34.86px;color:#a9a9a9;font-weight:normal;font-style:normal;letter-spacing:0.223px;white-space:pre;;-webkit-text-stroke:0.6px">prevVal</div>
<div style="position:absolute;left:0;top:0;width:3840px;height:2058px;overflow:hidden;pointer-events:none">
<div style="position:absolute;left:2396.00px;top:178.80px;width:2.40px;height:1881.20px;background:#5a5a5a;"></div>
<div style="position:absolute;left:3206.00px;top:178.80px;width:2.40px;height:1881.20px;background:#5a5a5a;"></div>
<div style="position:absolute;left:778.60px;top:229.20px;width:2.20px;height:50.40px;background:#404040;"></div>
<div style="position:absolute;left:778.60px;top:279.60px;width:2.20px;height:50.40px;background:#404040;"></div>
<div style="position:absolute;left:778.60px;top:330.00px;width:2.20px;height:50.40px;background:#404040;"></div>
<div style="position:absolute;left:778.60px;top:834.00px;width:2.20px;height:50.40px;background:#404040;"></div>
<div style="position:absolute;left:778.60px;top:884.40px;width:2.20px;height:50.40px;background:#404040;"></div>
<div style="position:absolute;left:778.60px;top:934.80px;width:2.20px;height:50.40px;background:#404040;"></div>
<div style="position:absolute;left:778.60px;top:985.20px;width:2.20px;height:50.40px;background:#404040;"></div>
<div style="position:absolute;left:778.60px;top:1035.60px;width:2.20px;height:50.40px;background:#404040;"></div>
<div style="position:absolute;left:778.60px;top:1086.00px;width:2.20px;height:50.40px;background:#404040;"></div>
<div style="position:absolute;left:778.60px;top:1136.40px;width:2.20px;height:50.40px;background:#404040;"></div>
<div style="position:absolute;left:778.60px;top:1186.80px;width:2.20px;height:50.40px;background:#404040;"></div>
<div style="position:absolute;left:778.60px;top:1237.20px;width:2.20px;height:50.40px;background:#404040;"></div>
<div style="position:absolute;left:778.60px;top:1287.60px;width:2.20px;height:50.40px;background:#404040;"></div>
<div style="position:absolute;left:778.60px;top:1338.00px;width:2.20px;height:50.40px;background:#404040;"></div>
<div style="position:absolute;left:778.60px;top:1388.40px;width:2.20px;height:50.40px;background:#404040;"></div>
<div style="position:absolute;left:778.60px;top:1438.80px;width:2.20px;height:50.40px;background:#404040;"></div>
<div style="position:absolute;left:778.60px;top:1489.20px;width:2.20px;height:50.40px;background:#404040;"></div>
<div style="position:absolute;left:778.60px;top:1539.60px;width:2.20px;height:50.40px;background:#404040;"></div>
<div style="position:absolute;left:778.60px;top:1590.00px;width:2.20px;height:50.40px;background:#404040;"></div>
<div style="position:absolute;left:778.60px;top:1640.40px;width:2.20px;height:50.40px;background:#404040;"></div>
<div style="position:absolute;left:778.60px;top:1842.00px;width:2.20px;height:50.40px;background:#404040;"></div>
<div style="position:absolute;left:778.60px;top:1892.40px;width:2.20px;height:50.40px;background:#404040;"></div>
<div style="position:absolute;left:778.60px;top:1942.80px;width:2.20px;height:50.40px;background:#404040;"></div>
<div style="position:absolute;left:778.60px;top:1993.20px;width:2.20px;height:50.40px;background:#404040;"></div>
<div style="position:absolute;left:778.60px;top:2043.60px;width:2.20px;height:50.40px;background:#404040;"></div>
<div style="position:absolute;left:819.04px;top:1136.40px;width:2.20px;height:50.40px;background:#404040;"></div>
<div style="position:absolute;left:819.04px;top:1186.80px;width:2.20px;height:50.40px;background:#404040;"></div>
<div style="position:absolute;left:819.04px;top:1237.20px;width:2.20px;height:50.40px;background:#404040;"></div>
<div style="position:absolute;left:819.04px;top:1287.60px;width:2.20px;height:50.40px;background:#404040;"></div>
<div style="position:absolute;left:819.04px;top:1338.00px;width:2.20px;height:50.40px;background:#404040;"></div>
<div style="position:absolute;left:819.04px;top:1388.40px;width:2.20px;height:50.40px;background:#404040;"></div>
<div style="position:absolute;left:819.04px;top:1892.40px;width:2.20px;height:50.40px;background:#404040;"></div>
<div style="position:absolute;left:819.04px;top:1942.80px;width:2.20px;height:50.40px;background:#404040;"></div>
<div style="position:absolute;left:819.04px;top:2043.60px;width:2.20px;height:50.40px;background:#404040;"></div>
<div style="position:absolute;left:859.48px;top:1186.80px;width:2.20px;height:50.40px;background:#404040;"></div>
<div style="position:absolute;left:859.48px;top:1237.20px;width:2.20px;height:50.40px;background:#404040;"></div>
<div style="position:absolute;left:859.48px;top:1338.00px;width:2.20px;height:50.40px;background:#404040;"></div>
<div style="position:absolute;left:600px;width:116px;text-align:right;top:186.83px;font-family:'Liberation Mono', monospace;font-size:33.6px;line-height:38.06px;color:#858585;letter-spacing:0.057px;-webkit-text-stroke:0.5px;transform:scaleY(1.1);transform-origin:0 27.97px">1</div>
<div style="position:absolute;left:779.2px;top:186.83px;font-family:'Liberation Mono', monospace;font-size:33.6px;line-height:38.06px;letter-spacing:0.057px;white-space:pre;-webkit-text-stroke:0.6px;transform:scaleY(1.08);transform-origin:0 27.97px"><span style="color:#5b9b4c">/<span style="display:inline-block;transform:translateY(8px) scale(1.5)">*</span><span style="display:inline-block;transform:translateY(8px) scale(1.5)">*</span></span></div>
<div style="position:absolute;left:600px;width:116px;text-align:right;top:237.23px;font-family:'Liberation Mono', monospace;font-size:33.6px;line-height:38.06px;color:#858585;letter-spacing:0.057px;-webkit-text-stroke:0.5px;transform:scaleY(1.1);transform-origin:0 27.97px">2</div>
<div style="position:absolute;left:779.2px;top:237.23px;font-family:'Liberation Mono', monospace;font-size:33.6px;line-height:38.06px;letter-spacing:0.057px;white-space:pre;-webkit-text-stroke:0.6px;transform:scaleY(1.08);transform-origin:0 27.97px"><span style="color:#5b9b4c"> <span style="display:inline-block;transform:translateY(8px) scale(1.5)">*</span> </span><span style="color:#5b9b4c;text-decoration:underline;text-decoration-thickness:2.4px;text-underline-offset:10px;text-decoration-skip-ink:none">https://github.com/BBKolton/reactify-wc/</span></div>
<div style="position:absolute;left:600px;width:116px;text-align:right;top:287.63px;font-family:'Liberation Mono', monospace;font-size:33.6px;line-height:38.06px;color:#858585;letter-spacing:0.057px;-webkit-text-stroke:0.5px;transform:scaleY(1.1);transform-origin:0 27.97px">3</div>
<div style="position:absolute;left:779.2px;top:287.63px;font-family:'Liberation Mono', monospace;font-size:33.6px;line-height:38.06px;letter-spacing:0.057px;white-space:pre;-webkit-text-stroke:0.6px;transform:scaleY(1.08);transform-origin:0 27.97px"><span style="color:#5b9b4c"> <span style="display:inline-block;transform:translateY(8px) scale(1.5)">*</span> modified event naming</span></div>
<div style="position:absolute;left:600px;width:116px;text-align:right;top:338.03px;font-family:'Liberation Mono', monospace;font-size:33.6px;line-height:38.06px;color:#858585;letter-spacing:0.057px;-webkit-text-stroke:0.5px;transform:scaleY(1.1);transform-origin:0 27.97px">4</div>
<div style="position:absolute;left:779.2px;top:338.03px;font-family:'Liberation Mono', monospace;font-size:33.6px;line-height:38.06px;letter-spacing:0.057px;white-space:pre;-webkit-text-stroke:0.6px;transform:scaleY(1.08);transform-origin:0 27.97px"><span style="color:#5b9b4c"> <span style="display:inline-block;transform:translateY(8px) scale(1.5)">*</span><span style="display:inline-block;transform:translateY(8px) scale(1.5)">*</span>/</span></div>
<div style="position:absolute;left:600px;width:116px;text-align:right;top:388.43px;font-family:'Liberation Mono', monospace;font-size:33.6px;line-height:38.06px;color:#858585;letter-spacing:0.057px;-webkit-text-stroke:0.5px;transform:scaleY(1.1);transform-origin:0 27.97px">5</div>
<div style="position:absolute;left:779.2px;top:388.43px;font-family:'Liberation Mono', monospace;font-size:33.6px;line-height:38.06px;letter-spacing:0.057px;white-space:pre;-webkit-text-stroke:0.6px;transform:scaleY(1.08);transform-origin:0 27.97px"><span style="color:#d082c4">import</span><span style="color:#d4d4d4"> </span><span style="color:#88deff">React</span><span style="color:#d4d4d4">, </span><span style="color:#ffd500">{</span><span style="color:#d4d4d4"> </span><span style="color:#88deff">createRef</span><span style="color:#d4d4d4">, </span><span style="color:#88deff">createElement</span><span style="color:#d4d4d4"> </span><span style="color:#ffd500">}</span><span style="color:#d4d4d4"> </span><span style="color:#d082c4">from</span><span style="color:#d4d4d4"> </span><span style="color:#d98e73">'react'</span></div>
<div style="position:absolute;left:600px;width:116px;text-align:right;top:438.83px;font-family:'Liberation Mono', monospace;font-size:33.6px;line-height:38.06px;color:#858585;letter-spacing:0.057px;-webkit-text-stroke:0.5px;transform:scaleY(1.1);transform-origin:0 27.97px">6</div>
<div style="position:absolute;left:779.2px;top:438.83px;font-family:'Liberation Mono', monospace;font-size:33.6px;line-height:38.06px;letter-spacing:0.057px;white-space:pre;-webkit-text-stroke:0.6px;transform:scaleY(1.08);transform-origin:0 27.97px"></div>
<div style="position:absolute;left:600px;width:116px;text-align:right;top:489.23px;font-family:'Liberation Mono', monospace;font-size:33.6px;line-height:38.06px;color:#858585;letter-spacing:0.057px;-webkit-text-stroke:0.5px;transform:scaleY(1.1);transform-origin:0 27.97px">7</div>
<div style="position:absolute;left:779.2px;top:489.23px;font-family:'Liberation Mono', monospace;font-size:33.6px;line-height:38.06px;letter-spacing:0.057px;white-space:pre;-webkit-text-stroke:0.6px;transform:scaleY(1.08);transform-origin:0 27.97px"><span style="color:#5b9b4c">// eslint-disable-next-line</span></div>
<div style="position:absolute;left:600px;width:116px;text-align:right;top:539.63px;font-family:'Liberation Mono', monospace;font-size:33.6px;line-height:38.06px;color:#858585;letter-spacing:0.057px;-webkit-text-stroke:0.5px;transform:scaleY(1.1);transform-origin:0 27.97px">8</div>
<div style="position:absolute;left:779.2px;top:539.63px;font-family:'Liberation Mono', monospace;font-size:33.6px;line-height:38.06px;letter-spacing:0.057px;white-space:pre;-webkit-text-stroke:0.6px;transform:scaleY(1.08);transform-origin:0 27.97px"><span style="color:#389edb">const</span><span style="color:#d4d4d4"> </span><span style="color:#dcdca4">h</span><span style="color:#d4d4d4"> = </span><span style="color:#00ccaf">React</span><span style="color:#d4d4d4">.</span><span style="color:#dcdca4">createElement</span></div>
<div style="position:absolute;left:600px;width:116px;text-align:right;top:590.03px;font-family:'Liberation Mono', monospace;font-size:33.6px;line-height:38.06px;color:#858585;letter-spacing:0.057px;-webkit-text-stroke:0.5px;transform:scaleY(1.1);transform-origin:0 27.97px">9</div>
<div style="position:absolute;left:779.2px;top:590.03px;font-family:'Liberation Mono', monospace;font-size:33.6px;line-height:38.06px;letter-spacing:0.057px;white-space:pre;-webkit-text-stroke:0.6px;transform:scaleY(1.08);transform-origin:0 27.97px"></div>
<div style="position:absolute;left:600px;width:116px;text-align:right;top:640.43px;font-family:'Liberation Mono', monospace;font-size:33.6px;line-height:38.06px;color:#858585;letter-spacing:0.057px;-webkit-text-stroke:0.5px;transform:scaleY(1.1);transform-origin:0 27.97px">10</div>
<div style="position:absolute;left:779.2px;top:640.43px;font-family:'Liberation Mono', monospace;font-size:33.6px;line-height:38.06px;letter-spacing:0.057px;white-space:pre;-webkit-text-stroke:0.6px;transform:scaleY(1.08);transform-origin:0 27.97px"><span style="color:#389edb">const</span><span style="color:#d4d4d4"> </span><span style="color:#00c4ff">SCROLL_VIEW</span><span style="color:#d4d4d4"> = </span><span style="color:#d98e73">'taro-scroll-view-core'</span></div>
<div style="position:absolute;left:600px;width:116px;text-align:right;top:690.83px;font-family:'Liberation Mono', monospace;font-size:33.6px;line-height:38.06px;color:#858585;letter-spacing:0.057px;-webkit-text-stroke:0.5px;transform:scaleY(1.1);transform-origin:0 27.97px">11</div>
<div style="position:absolute;left:779.2px;top:690.83px;font-family:'Liberation Mono', monospace;font-size:33.6px;line-height:38.06px;letter-spacing:0.057px;white-space:pre;-webkit-text-stroke:0.6px;transform:scaleY(1.08);transform-origin:0 27.97px"></div>
<div style="position:absolute;left:600px;width:116px;text-align:right;top:741.23px;font-family:'Liberation Mono', monospace;font-size:33.6px;line-height:38.06px;color:#858585;letter-spacing:0.057px;-webkit-text-stroke:0.5px;transform:scaleY(1.1);transform-origin:0 27.97px">12</div>
<div style="position:absolute;left:779.2px;top:741.23px;font-family:'Liberation Mono', monospace;font-size:33.6px;line-height:38.06px;letter-spacing:0.057px;white-space:pre;-webkit-text-stroke:0.6px;transform:scaleY(1.08);transform-origin:0 27.97px"><span style="color:#5b9b4c">// <span style="display:inline-block;width:33.60px;letter-spacing:0">为</span><span style="display:inline-block;width:33.60px;letter-spacing:0">了</span><span style="display:inline-block;width:33.60px;letter-spacing:0">不</span><span style="display:inline-block;width:33.60px;letter-spacing:0">要</span><span style="display:inline-block;width:33.60px;letter-spacing:0">覆</span><span style="display:inline-block;width:33.60px;letter-spacing:0">盖</span> wc <span style="display:inline-block;width:33.60px;letter-spacing:0">中</span> host <span style="display:inline-block;width:33.60px;letter-spacing:0">内</span><span style="display:inline-block;width:33.60px;letter-spacing:0">置</span><span style="display:inline-block;width:33.60px;letter-spacing:0">的</span> class <span style="display:inline-block;width:33.60px;letter-spacing:0">和</span> stencil <span style="display:inline-block;width:33.60px;letter-spacing:0">加</span><span style="display:inline-block;width:33.60px;letter-spacing:0">入</span><span style="display:inline-block;width:33.60px;letter-spacing:0">的</span> class</span></div>
<div style="position:absolute;left:600px;width:116px;text-align:right;top:791.63px;font-family:'Liberation Mono', monospace;font-size:33.6px;line-height:38.06px;color:#858585;letter-spacing:0.057px;-webkit-text-stroke:0.5px;transform:scaleY(1.1);transform-origin:0 27.97px">13</div>
<div style="position:absolute;left:779.2px;top:791.63px;font-family:'Liberation Mono', monospace;font-size:33.6px;line-height:38.06px;letter-spacing:0.057px;white-space:pre;-webkit-text-stroke:0.6px;transform:scaleY(1.08);transform-origin:0 27.97px"><span style="color:#389edb">function</span><span style="color:#d4d4d4"> </span><span style="color:#dcdca4">getClassName</span><span style="color:#d4d4d4"> </span><span style="color:#ffd500">(</span><span style="color:#88deff">wc</span><span style="color:#d4d4d4">, </span><span style="color:#88deff">prevProps</span><span style="color:#d4d4d4">, </span><span style="color:#88deff">props</span><span style="color:#ffd500">)</span><span style="color:#d4d4d4"> </span><span style="color:#ffd500">{</span></div>
<div style="position:absolute;left:600px;width:116px;text-align:right;top:842.03px;font-family:'Liberation Mono', monospace;font-size:33.6px;line-height:38.06px;color:#858585;letter-spacing:0.057px;-webkit-text-stroke:0.5px;transform:scaleY(1.1);transform-origin:0 27.97px">14</div>
<div style="position:absolute;left:779.2px;top:842.03px;font-family:'Liberation Mono', monospace;font-size:33.6px;line-height:38.06px;letter-spacing:0.057px;white-space:pre;-webkit-text-stroke:0.6px;transform:scaleY(1.08);transform-origin:0 27.97px"><span style="color:#d4d4d4">  </span><span style="color:#389edb">const</span><span style="color:#d4d4d4"> </span><span style="color:#00c4ff">classList</span><span style="color:#d4d4d4"> = </span><span style="color:#00ccaf">Array</span><span style="color:#d4d4d4">.</span><span style="color:#dcdca4">from</span><span style="color:#ea68db">(</span><span style="color:#88deff">wc</span><span style="color:#d4d4d4">.</span><span style="color:#88deff">classList</span><span style="color:#ea68db">)</span></div>
<div style="position:absolute;left:600px;width:116px;text-align:right;top:892.43px;font-family:'Liberation Mono', monospace;font-size:33.6px;line-height:38.06px;color:#858585;letter-spacing:0.057px;-webkit-text-stroke:0.5px;transform:scaleY(1.1);transform-origin:0 27.97px">15</div>
<div style="position:absolute;left:779.2px;top:892.43px;font-family:'Liberation Mono', monospace;font-size:33.6px;line-height:38.06px;letter-spacing:0.057px;white-space:pre;-webkit-text-stroke:0.6px;transform:scaleY(1.08);transform-origin:0 27.97px"><span style="color:#d4d4d4">  </span><span style="color:#389edb">const</span><span style="color:#d4d4d4"> </span><span style="color:#00c4ff">oldClassNames</span><span style="color:#d4d4d4"> = </span><span style="color:#ea68db">(</span><span style="color:#88deff">prevProps</span><span style="color:#d4d4d4">.</span><span style="color:#88deff">className</span><span style="color:#d4d4d4"> || </span><span style="color:#88deff">prevProps</span><span style="color:#d4d4d4">.</span><span style="color:#88deff">class</span><span style="color:#d4d4d4"> || </span><span style="color:#d98e73">''</span><span style="color:#ea68db">)</span><span style="color:#d4d4d4">.</span><span style="color:#dcdca4">split</span><span style="color:#ea68db">(</span><span style="color:#d98e73">' '</span><span style="color:#ea68db">)</span></div>
<div style="position:absolute;left:600px;width:116px;text-align:right;top:942.83px;font-family:'Liberation Mono', monospace;font-size:33.6px;line-height:38.06px;color:#858585;letter-spacing:0.057px;-webkit-text-stroke:0.5px;transform:scaleY(1.1);transform-origin:0 27.97px">16</div>
<div style="position:absolute;left:779.2px;top:942.83px;font-family:'Liberation Mono', monospace;font-size:33.6px;line-height:38.06px;letter-spacing:0.057px;white-space:pre;-webkit-text-stroke:0.6px;transform:scaleY(1.08);transform-origin:0 27.97px"><span style="color:#d4d4d4">  </span><span style="color:#389edb">let</span><span style="color:#d4d4d4"> </span><span style="color:#88deff">incomingClassNames</span><span style="color:#d4d4d4"> = </span><span style="color:#ea68db">(</span><span style="color:#88deff">props</span><span style="color:#d4d4d4">.</span><span style="color:#88deff">className</span><span style="color:#d4d4d4"> || </span><span style="color:#88deff">props</span><span style="color:#d4d4d4">.</span><span style="color:#88deff">class</span><span style="color:#d4d4d4"> || </span><span style="color:#d98e73">''</span><span style="color:#ea68db">)</span><span style="color:#d4d4d4">.</span><span style="color:#dcdca4">split</span><span style="color:#ea68db">(</span><span style="color:#d98e73">' '</span><span style="color:#ea68db">)</span></div>
<div style="position:absolute;left:600px;width:116px;text-align:right;top:993.23px;font-family:'Liberation Mono', monospace;font-size:33.6px;line-height:38.06px;color:#858585;letter-spacing:0.057px;-webkit-text-stroke:0.5px;transform:scaleY(1.1);transform-origin:0 27.97px">17</div>
<div style="position:absolute;left:779.2px;top:993.23px;font-family:'Liberation Mono', monospace;font-size:33.6px;line-height:38.06px;letter-spacing:0.057px;white-space:pre;-webkit-text-stroke:0.6px;transform:scaleY(1.08);transform-origin:0 27.97px"><span style="color:#d4d4d4">  </span><span style="color:#389edb">let</span><span style="color:#d4d4d4"> </span><span style="color:#88deff">finalClassNames</span><span style="color:#d4d4d4"> = </span><span style="color:#ea68db">[]</span></div>
<div style="position:absolute;left:600px;width:116px;text-align:right;top:1043.63px;font-family:'Liberation Mono', monospace;font-size:33.6px;line-height:38.06px;color:#858585;letter-spacing:0.057px;-webkit-text-stroke:0.5px;transform:scaleY(1.1);transform-origin:0 27.97px">18</div>
<div style="position:absolute;left:779.2px;top:1043.63px;font-family:'Liberation Mono', monospace;font-size:33.6px;line-height:38.06px;letter-spacing:0.057px;white-space:pre;-webkit-text-stroke:0.6px;transform:scaleY(1.08);transform-origin:0 27.97px"></div>
<div style="position:absolute;left:600px;width:116px;text-align:right;top:1094.03px;font-family:'Liberation Mono', monospace;font-size:33.6px;line-height:38.06px;color:#858585;letter-spacing:0.057px;-webkit-text-stroke:0.5px;transform:scaleY(1.1);transform-origin:0 27.97px">19</div>
<div style="position:absolute;left:779.2px;top:1094.03px;font-family:'Liberation Mono', monospace;font-size:33.6px;line-height:38.06px;letter-spacing:0.057px;white-space:pre;-webkit-text-stroke:0.6px;transform:scaleY(1.08);transform-origin:0 27.97px"><span style="color:#d4d4d4">  </span><span style="color:#00c4ff">classList</span><span style="color:#d4d4d4">.</span><span style="color:#dcdca4">forEach</span><span style="color:#ea68db">(</span><span style="color:#88deff">classname</span><span style="color:#d4d4d4"> </span><span style="color:#389edb">=&gt;</span><span style="color:#d4d4d4"> </span><span style="color:#6fd0ff">{</span></div>
<div style="position:absolute;left:600px;width:116px;text-align:right;top:1144.43px;font-family:'Liberation Mono', monospace;font-size:33.6px;line-height:38.06px;color:#858585;letter-spacing:0.057px;-webkit-text-stroke:0.5px;transform:scaleY(1.1);transform-origin:0 27.97px">20</div>
<div style="position:absolute;left:779.2px;top:1144.43px;font-family:'Liberation Mono', monospace;font-size:33.6px;line-height:38.06px;letter-spacing:0.057px;white-space:pre;-webkit-text-stroke:0.6px;transform:scaleY(1.08);transform-origin:0 27.97px"><span style="color:#d4d4d4">    </span><span style="color:#d082c4">if</span><span style="color:#d4d4d4"> </span><span style="color:#ffd500">(</span><span style="color:#88deff">incomingClassNames</span><span style="color:#d4d4d4">.</span><span style="color:#dcdca4">indexOf</span><span style="color:#ea68db">(</span><span style="color:#88deff">classname</span><span style="color:#ea68db">)</span><span style="color:#d4d4d4"> &gt; -</span><span style="color:#afcfa4">1</span><span style="color:#ffd500">)</span><span style="color:#d4d4d4"> </span><span style="color:#ffd500">{</span></div>
<div style="position:absolute;left:600px;width:116px;text-align:right;top:1194.83px;font-family:'Liberation Mono', monospace;font-size:33.6px;line-height:38.06px;color:#858585;letter-spacing:0.057px;-webkit-text-stroke:0.5px;transform:scaleY(1.1);transform-origin:0 27.97px">21</div>
<div style="position:absolute;left:779.2px;top:1194.83px;font-family:'Liberation Mono', monospace;font-size:33.6px;line-height:38.06px;letter-spacing:0.057px;white-space:pre;-webkit-text-stroke:0.6px;transform:scaleY(1.08);transform-origin:0 27.97px"><span style="color:#d4d4d4">      </span><span style="color:#88deff">finalClassNames</span><span style="color:#d4d4d4">.</span><span style="color:#dcdca4">push</span><span style="color:#ea68db">(</span><span style="color:#88deff">classname</span><span style="color:#ea68db">)</span></div>
<div style="position:absolute;left:600px;width:116px;text-align:right;top:1245.23px;font-family:'Liberation Mono', monospace;font-size:33.6px;line-height:38.06px;color:#858585;letter-spacing:0.057px;-webkit-text-stroke:0.5px;transform:scaleY(1.1);transform-origin:0 27.97px">22</div>
<div style="position:absolute;left:779.2px;top:1245.23px;font-family:'Liberation Mono', monospace;font-size:33.6px;line-height:38.06px;letter-spacing:0.057px;white-space:pre;-webkit-text-stroke:0.6px;transform:scaleY(1.08);transform-origin:0 27.97px"><span style="color:#d4d4d4">      </span><span style="color:#88deff">incomingClassNames</span><span style="color:#d4d4d4"> = </span><span style="color:#88deff">incomingClassNames</span><span style="color:#d4d4d4">.</span><span style="color:#dcdca4">filter</span><span style="color:#ea68db">(</span><span style="color:#88deff">name</span><span style="color:#d4d4d4"> </span><span style="color:#389edb">=&gt;</span><span style="color:#d4d4d4"> </span><span style="color:#88deff">name</span><span style="color:#d4d4d4"> !== </span><span style="color:#88deff">classname</span><span style="color:#ea68db">)</span></div>
<div style="position:absolute;left:600px;width:116px;text-align:right;top:1295.63px;font-family:'Liberation Mono', monospace;font-size:33.6px;line-height:38.06px;color:#858585;letter-spacing:0.057px;-webkit-text-stroke:0.5px;transform:scaleY(1.1);transform-origin:0 27.97px">23</div>
<div style="position:absolute;left:779.2px;top:1295.63px;font-family:'Liberation Mono', monospace;font-size:33.6px;line-height:38.06px;letter-spacing:0.057px;white-space:pre;-webkit-text-stroke:0.6px;transform:scaleY(1.08);transform-origin:0 27.97px"><span style="color:#d4d4d4">    </span><span style="color:#ffd500">}</span><span style="color:#d4d4d4"> </span><span style="color:#d082c4">else</span><span style="color:#d4d4d4"> </span><span style="color:#d082c4">if</span><span style="color:#d4d4d4"> </span><span style="color:#ffd500">(</span><span style="color:#00c4ff">oldClassNames</span><span style="color:#d4d4d4">.</span><span style="color:#dcdca4">indexOf</span><span style="color:#ea68db">(</span><span style="color:#88deff">classname</span><span style="color:#ea68db">)</span><span style="color:#d4d4d4"> === -</span><span style="color:#afcfa4">1</span><span style="color:#ffd500">)</span><span style="color:#d4d4d4"> </span><span style="color:#ffd500">{</span></div>
<div style="position:absolute;left:600px;width:116px;text-align:right;top:1346.03px;font-family:'Liberation Mono', monospace;font-size:33.6px;line-height:38.06px;color:#858585;letter-spacing:0.057px;-webkit-text-stroke:0.5px;transform:scaleY(1.1);transform-origin:0 27.97px">24</div>
<div style="position:absolute;left:779.2px;top:1346.03px;font-family:'Liberation Mono', monospace;font-size:33.6px;line-height:38.06px;letter-spacing:0.057px;white-space:pre;-webkit-text-stroke:0.6px;transform:scaleY(1.08);transform-origin:0 27.97px"><span style="color:#d4d4d4">      </span><span style="color:#88deff">finalClassNames</span><span style="color:#d4d4d4">.</span><span style="color:#dcdca4">push</span><span style="color:#ea68db">(</span><span style="color:#88deff">classname</span><span style="color:#ea68db">)</span></div>
<div style="position:absolute;left:600px;width:116px;text-align:right;top:1396.43px;font-family:'Liberation Mono', monospace;font-size:33.6px;line-height:38.06px;color:#858585;letter-spacing:0.057px;-webkit-text-stroke:0.5px;transform:scaleY(1.1);transform-origin:0 27.97px">25</div>
<div style="position:absolute;left:779.2px;top:1396.43px;font-family:'Liberation Mono', monospace;font-size:33.6px;line-height:38.06px;letter-spacing:0.057px;white-space:pre;-webkit-text-stroke:0.6px;transform:scaleY(1.08);transform-origin:0 27.97px"><span style="color:#d4d4d4">    </span><span style="color:#ffd500">}</span></div>
<div style="position:absolute;left:600px;width:116px;text-align:right;top:1446.83px;font-family:'Liberation Mono', monospace;font-size:33.6px;line-height:38.06px;color:#858585;letter-spacing:0.057px;-webkit-text-stroke:0.5px;transform:scaleY(1.1);transform-origin:0 27.97px">26</div>
<div style="position:absolute;left:779.2px;top:1446.83px;font-family:'Liberation Mono', monospace;font-size:33.6px;line-height:38.06px;letter-spacing:0.057px;white-space:pre;-webkit-text-stroke:0.6px;transform:scaleY(1.08);transform-origin:0 27.97px"><span style="color:#d4d4d4">  </span><span style="color:#6fd0ff">}</span><span style="color:#ea68db">)</span></div>
<div style="position:absolute;left:600px;width:116px;text-align:right;top:1497.23px;font-family:'Liberation Mono', monospace;font-size:33.6px;line-height:38.06px;color:#858585;letter-spacing:0.057px;-webkit-text-stroke:0.5px;transform:scaleY(1.1);transform-origin:0 27.97px">27</div>
<div style="position:absolute;left:779.2px;top:1497.23px;font-family:'Liberation Mono', monospace;font-size:33.6px;line-height:38.06px;letter-spacing:0.057px;white-space:pre;-webkit-text-stroke:0.6px;transform:scaleY(1.08);transform-origin:0 27.97px"></div>
<div style="position:absolute;left:600px;width:116px;text-align:right;top:1547.63px;font-family:'Liberation Mono', monospace;font-size:33.6px;line-height:38.06px;color:#858585;letter-spacing:0.057px;-webkit-text-stroke:0.5px;transform:scaleY(1.1);transform-origin:0 27.97px">28</div>
<div style="position:absolute;left:779.2px;top:1547.63px;font-family:'Liberation Mono', monospace;font-size:33.6px;line-height:38.06px;letter-spacing:0.057px;white-space:pre;-webkit-text-stroke:0.6px;transform:scaleY(1.08);transform-origin:0 27.97px"><span style="color:#d4d4d4">  </span><span style="color:#88deff">finalClassNames</span><span style="color:#d4d4d4"> = </span><span style="color:#ea68db">[</span><span style="color:#d4d4d4">...</span><span style="color:#88deff">finalClassNames</span><span style="color:#d4d4d4">, ...</span><span style="color:#88deff">incomingClassNames</span><span style="color:#ea68db">]</span></div>
<div style="position:absolute;left:600px;width:116px;text-align:right;top:1598.03px;font-family:'Liberation Mono', monospace;font-size:33.6px;line-height:38.06px;color:#858585;letter-spacing:0.057px;-webkit-text-stroke:0.5px;transform:scaleY(1.1);transform-origin:0 27.97px">29</div>
<div style="position:absolute;left:779.2px;top:1598.03px;font-family:'Liberation Mono', monospace;font-size:33.6px;line-height:38.06px;letter-spacing:0.057px;white-space:pre;-webkit-text-stroke:0.6px;transform:scaleY(1.08);transform-origin:0 27.97px"></div>
<div style="position:absolute;left:600px;width:116px;text-align:right;top:1648.43px;font-family:'Liberation Mono', monospace;font-size:33.6px;line-height:38.06px;color:#858585;letter-spacing:0.057px;-webkit-text-stroke:0.5px;transform:scaleY(1.1);transform-origin:0 27.97px">30</div>
<div style="position:absolute;left:779.2px;top:1648.43px;font-family:'Liberation Mono', monospace;font-size:33.6px;line-height:38.06px;letter-spacing:0.057px;white-space:pre;-webkit-text-stroke:0.6px;transform:scaleY(1.08);transform-origin:0 27.97px"><span style="color:#d4d4d4">  </span><span style="color:#d082c4">return</span><span style="color:#d4d4d4"> </span><span style="color:#88deff">finalClassNames</span><span style="color:#d4d4d4">.</span><span style="color:#dcdca4">join</span><span style="color:#ea68db">(</span><span style="color:#d98e73">' '</span><span style="color:#ea68db">)</span></div>
<div style="position:absolute;left:600px;width:116px;text-align:right;top:1698.83px;font-family:'Liberation Mono', monospace;font-size:33.6px;line-height:38.06px;color:#858585;letter-spacing:0.057px;-webkit-text-stroke:0.5px;transform:scaleY(1.1);transform-origin:0 27.97px">31</div>
<div style="position:absolute;left:779.2px;top:1698.83px;font-family:'Liberation Mono', monospace;font-size:33.6px;line-height:38.06px;letter-spacing:0.057px;white-space:pre;-webkit-text-stroke:0.6px;transform:scaleY(1.08);transform-origin:0 27.97px"><span style="color:#ffd500">}</span></div>
<div style="position:absolute;left:600px;width:116px;text-align:right;top:1749.23px;font-family:'Liberation Mono', monospace;font-size:33.6px;line-height:38.06px;color:#858585;letter-spacing:0.057px;-webkit-text-stroke:0.5px;transform:scaleY(1.1);transform-origin:0 27.97px">32</div>
<div style="position:absolute;left:779.2px;top:1749.23px;font-family:'Liberation Mono', monospace;font-size:33.6px;line-height:38.06px;letter-spacing:0.057px;white-space:pre;-webkit-text-stroke:0.6px;transform:scaleY(1.08);transform-origin:0 27.97px"></div>
<div style="position:absolute;left:600px;width:116px;text-align:right;top:1799.63px;font-family:'Liberation Mono', monospace;font-size:33.6px;line-height:38.06px;color:#858585;letter-spacing:0.057px;-webkit-text-stroke:0.5px;transform:scaleY(1.1);transform-origin:0 27.97px">33</div>
<div style="position:absolute;left:779.2px;top:1799.63px;font-family:'Liberation Mono', monospace;font-size:33.6px;line-height:38.06px;letter-spacing:0.057px;white-space:pre;-webkit-text-stroke:0.6px;transform:scaleY(1.08);transform-origin:0 27.97px"><span style="color:#389edb">function</span><span style="color:#d4d4d4"> </span><span style="color:#dcdca4">updateStyle</span><span style="color:#d4d4d4"> </span><span style="color:#ffd500">(</span><span style="color:#88deff">dom</span><span style="color:#d4d4d4">, </span><span style="color:#88deff">key</span><span style="color:#d4d4d4">, </span><span style="color:#88deff">val</span><span style="color:#ffd500">)</span><span style="color:#d4d4d4"> </span><span style="color:#ffd500">{</span></div>
<div style="position:absolute;left:600px;width:116px;text-align:right;top:1850.03px;font-family:'Liberation Mono', monospace;font-size:33.6px;line-height:38.06px;color:#858585;letter-spacing:0.057px;-webkit-text-stroke:0.5px;transform:scaleY(1.1);transform-origin:0 27.97px">34</div>
<div style="position:absolute;left:779.2px;top:1850.03px;font-family:'Liberation Mono', monospace;font-size:33.6px;line-height:38.06px;letter-spacing:0.057px;white-space:pre;-webkit-text-stroke:0.6px;transform:scaleY(1.08);transform-origin:0 27.97px"><span style="color:#d4d4d4">  </span><span style="color:#d082c4">if</span><span style="color:#d4d4d4"> </span><span style="color:#ea68db">(</span><span style="color:#e16165">/</span><span style="color:#dcdca4">^</span><span style="color:#e16165">--/</span><span style="color:#d4d4d4">.</span><span style="color:#dcdca4">test</span><span style="color:#6fd0ff">(</span><span style="color:#88deff">key</span><span style="color:#6fd0ff">)</span><span style="color:#ea68db">)</span><span style="color:#d4d4d4"> </span><span style="color:#ea68db">{</span></div>
<div style="position:absolute;left:600px;width:116px;text-align:right;top:1900.43px;font-family:'Liberation Mono', monospace;font-size:33.6px;line-height:38.06px;color:#858585;letter-spacing:0.057px;-webkit-text-stroke:0.5px;transform:scaleY(1.1);transform-origin:0 27.97px">35</div>
<div style="position:absolute;left:779.2px;top:1900.43px;font-family:'Liberation Mono', monospace;font-size:33.6px;line-height:38.06px;letter-spacing:0.057px;white-space:pre;-webkit-text-stroke:0.6px;transform:scaleY(1.08);transform-origin:0 27.97px"><span style="color:#d4d4d4">    </span><span style="color:#5b9b4c">// css variable</span></div>
<div style="position:absolute;left:600px;width:116px;text-align:right;top:1950.83px;font-family:'Liberation Mono', monospace;font-size:33.6px;line-height:38.06px;color:#858585;letter-spacing:0.057px;-webkit-text-stroke:0.5px;transform:scaleY(1.1);transform-origin:0 27.97px">36</div>
<div style="position:absolute;left:779.2px;top:1950.83px;font-family:'Liberation Mono', monospace;font-size:33.6px;line-height:38.06px;letter-spacing:0.057px;white-space:pre;-webkit-text-stroke:0.6px;transform:scaleY(1.08);transform-origin:0 27.97px"><span style="color:#d4d4d4">    </span><span style="color:#88deff">dom</span><span style="color:#d4d4d4">.</span><span style="color:#88deff">style</span><span style="color:#d4d4d4">.</span><span style="color:#dcdca4">setProperty</span><span style="color:#6fd0ff">(</span><span style="color:#88deff">key</span><span style="color:#d4d4d4">, </span><span style="color:#88deff">val</span><span style="color:#6fd0ff">)</span></div>
<div style="position:absolute;left:600px;width:116px;text-align:right;top:2001.23px;font-family:'Liberation Mono', monospace;font-size:33.6px;line-height:38.06px;color:#858585;letter-spacing:0.057px;-webkit-text-stroke:0.5px;transform:scaleY(1.1);transform-origin:0 27.97px">37</div>
<div style="position:absolute;left:779.2px;top:2001.23px;font-family:'Liberation Mono', monospace;font-size:33.6px;line-height:38.06px;letter-spacing:0.057px;white-space:pre;-webkit-text-stroke:0.6px;transform:scaleY(1.08);transform-origin:0 27.97px"><span style="color:#d4d4d4">  </span><span style="color:#ea68db">}</span><span style="color:#d4d4d4"> </span><span style="color:#d082c4">else</span><span style="color:#d4d4d4"> </span><span style="color:#ea68db">{</span></div>
<div style="position:absolute;left:600px;width:116px;text-align:right;top:2051.63px;font-family:'Liberation Mono', monospace;font-size:33.6px;line-height:38.06px;color:#858585;letter-spacing:0.057px;-webkit-text-stroke:0.5px;transform:scaleY(1.1);transform-origin:0 27.97px">38</div>
<div style="position:absolute;left:779.2px;top:2051.63px;font-family:'Liberation Mono', monospace;font-size:33.6px;line-height:38.06px;letter-spacing:0.057px;white-space:pre;-webkit-text-stroke:0.6px;transform:scaleY(1.08);transform-origin:0 27.97px"><span style="color:#d4d4d4">    </span><span style="color:#88deff">dom</span><span style="color:#d4d4d4">.</span><span style="color:#88deff">style</span><span style="color:#6fd0ff">[</span><span style="color:#88deff">key</span><span style="color:#6fd0ff">]</span><span style="color:#d4d4d4"> = </span><span style="color:#88deff">val</span></div>
</div>
<div style="position:absolute;left:3576.00px;top:354.80px;width:230.00px;height:4.00px;background:#1d4670;"></div>
<svg style="position:absolute;left:3576.00px;top:178.80px;" width="230" height="742" viewBox="0 0 230 742"><g opacity="0.55"><path d="M0 2.0h6M2 6.0h2M6 6.0h80M2 10.0h2M6 10.0h16M24 10.0h10M36 10.0h12M2 14.0h6M0 26.0h4M6 26.0h48M0 46.0h4M6 46.0h24M20 46.0h4M26 46.0h4M30 46.0h8M40 46.0h12M48 46.0h10M60 46.0h4M64 46.0h14M80 46.0h12M88 46.0h10M8 138.0h4M14 138.0h6M22 138.0h16M8 394.0h4M14 394.0h24M28 394.0h20M50 394.0h4M54 394.0h16M72 394.0h36" stroke="#5b9b4c" stroke-width="2.6" stroke-dasharray="1.6 0.4" fill="none"/><path d="M0 18.0h12M86 18.0h8M8 78.0h4M12 90.0h8M22 90.0h4M4 118.0h12M4 134.0h4M8 146.0h8M4 186.0h4M8 190.0h12M4 198.0h4M8 214.0h12M4 222.0h4M8 226.0h4M12 234.0h12M8 242.0h4M12 250.0h12M8 262.0h4M12 266.0h4M16 274.0h8M16 278.0h6M8 302.0h6M8 314.0h12M4 322.0h4M8 326.0h4M12 334.0h12M8 342.0h4M12 350.0h12M8 358.0h4M12 366.0h12M4 378.0h4M8 398.0h4M16 406.0h4M8 434.0h12M4 446.0h4M8 454.0h12M4 462.0h4M8 466.0h4M12 474.0h12M8 498.0h12M12 558.0h4M58 558.0h12M16 570.0h4M16 658.0h4M62 658.0h12M12 702.0h4M12 706.0h12M4 718.0h12M0 738.0h12M14 738.0h14" stroke="#d082c4" stroke-width="2.6" stroke-dasharray="1.6 0.4" fill="none"/><path d="M14 18.0h10M20 30.0h10M40 54.0h10M50 406.0h22M52 410.0h10M44 522.0h10M12 566.0h12M12 590.0h12M18 718.0h10M8 722.0h10" stroke="#00ccaf" stroke-width="2.6" stroke-dasharray="1.6 0.4" fill="none"/><path d="M24 18.0h2M28 18.0h2M50 18.0h2M82 18.0h2M16 30.0h2M30 30.0h2M36 38.0h2M44 50.0h2M50 50.0h2M72 50.0h2M86 50.0h2M90 50.0h2M36 54.0h2M50 54.0h2M60 54.0h2M66 54.0h2M86 54.0h2M44 58.0h2M48 58.0h2M68 58.0h2M90 58.0h4M114 58.0h2M128 58.0h4M138 58.0h4M152 58.0h2M160 58.0h2M50 62.0h2M54 62.0h2M66 62.0h2M88 62.0h4M104 62.0h2M118 62.0h4M128 62.0h4M142 62.0h2M150 62.0h2M44 66.0h2M48 66.0h4M22 74.0h2M38 74.0h2M66 74.0h2M14 78.0h2M52 78.0h2M68 78.0h2M88 78.0h2M92 78.0h2M96 78.0h2M100 78.0h2M104 78.0h2M42 82.0h2M52 82.0h2M72 82.0h2M50 86.0h2M90 86.0h2M104 86.0h2M132 86.0h6M158 86.0h2M8 90.0h2M28 90.0h2M56 90.0h2M72 90.0h2M92 90.0h2M96 90.0h6M104 90.0h2M108 90.0h2M112 90.0h2M42 94.0h2M52 94.0h2M72 94.0h2M8 98.0h2M4 102.0h4M36 110.0h2M40 110.0h8M78 110.0h2M82 110.0h6M124 110.0h2M48 118.0h2M58 118.0h2M66 118.0h2M0 122.0h2M42 130.0h2M50 130.0h2M60 130.0h2M70 130.0h2M74 130.0h2M10 134.0h14M32 134.0h2M40 134.0h4M46 134.0h2M14 142.0h2M26 142.0h2M50 142.0h2M58 142.0h2M68 142.0h2M4 146.0h2M18 146.0h2M14 150.0h2M26 150.0h2M34 150.0h2M38 150.0h2M4 154.0h2M0 158.0h2M40 166.0h2M48 166.0h2M60 166.0h2M78 166.0h2M100 166.0h2M114 166.0h2M118 166.0h2M24 170.0h2M34 170.0h2M42 170.0h2M24 174.0h2M38 174.0h2M54 174.0h2M32 178.0h2M56 178.0h2M78 178.0h2M94 178.0h2M98 178.0h2M10 186.0h2M28 186.0h6M56 186.0h2M60 186.0h2M4 194.0h2M10 198.0h2M26 198.0h2M50 198.0h4M56 198.0h6M86 198.0h2M90 198.0h2M14 202.0h2M36 202.0h2M12 206.0h2M40 206.0h2M48 206.0h2M70 206.0h2M84 206.0h2M12 210.0h2M4 218.0h2M10 222.0h2M28 222.0h6M50 222.0h2M54 222.0h2M14 226.0h2M38 226.0h6M62 226.0h2M66 226.0h2M18 230.0h2M44 230.0h2M60 230.0h2M70 230.0h2M8 238.0h2M14 242.0h4M24 242.0h2M28 242.0h2M18 246.0h2M50 246.0h2M66 246.0h2M8 254.0h2M14 262.0h2M34 262.0h2M38 262.0h2M18 266.0h2M50 266.0h6M74 266.0h2M78 266.0h2M22 270.0h2M34 270.0h2M52 270.0h2M12 274.0h2M26 274.0h2M24 278.0h2M76 278.0h2M80 278.0h2M42 282.0h2M50 282.0h2M70 282.0h2M78 282.0h2M16 286.0h2M12 290.0h2M8 294.0h2M16 302.0h2M60 302.0h2M64 302.0h2M34 306.0h2M42 306.0h2M62 306.0h2M72 306.0h2M90 306.0h4M8 310.0h2M4 318.0h2M10 322.0h2M22 322.0h6M52 322.0h2M56 322.0h2M14 326.0h2M32 326.0h6M62 326.0h2M66 326.0h2M18 330.0h2M44 330.0h2M8 338.0h2M14 342.0h2M32 342.0h6M64 342.0h2M68 342.0h2M18 346.0h2M46 346.0h2M8 354.0h2M14 358.0h2M32 358.0h6M72 358.0h2M76 358.0h2M18 362.0h2M54 362.0h2M8 370.0h2M4 374.0h2M10 378.0h2M34 378.0h6M64 378.0h4M84 378.0h2M96 378.0h6M106 378.0h2M110 378.0h2M114 378.0h8M124 378.0h2M32 382.0h2M50 382.0h2M64 382.0h2M68 382.0h4M94 382.0h4M22 386.0h2M14 398.0h2M26 398.0h6M58 398.0h4M76 398.0h6M100 398.0h2M104 398.0h2M18 402.0h2M40 402.0h2M44 402.0h2M48 402.0h2M22 406.0h2M72 406.0h2M76 406.0h2M26 410.0h2M38 410.0h2M48 410.0h2M62 410.0h2M72 410.0h2M92 410.0h4M16 414.0h2M12 418.0h2M8 422.0h2M14 430.0h2M42 430.0h2M52 430.0h4M66 430.0h2M74 430.0h4M28 434.0h2M62 434.0h2M74 434.0h2M82 434.0h2M4 438.0h2M10 446.0h2M34 446.0h6M60 446.0h4M88 446.0h6M112 446.0h2M116 446.0h2M14 450.0h2M30 450.0h2M34 450.0h2M4 458.0h2M10 462.0h2M34 462.0h6M60 462.0h2M64 462.0h2M14 466.0h2M22 466.0h2M26 466.0h2M18 470.0h2M34 470.0h2M38 470.0h2M32 474.0h2M58 474.0h2M30 478.0h2M12 486.0h2M8 490.0h2M14 494.0h2M30 494.0h2M34 494.0h2M28 498.0h2M60 498.0h2M76 498.0h2M4 502.0h2M10 506.0h2M26 506.0h2M30 506.0h2M0 510.0h2M54 518.0h2M70 518.0h2M54 522.0h2M76 522.0h2M32 526.0h2M44 526.0h2M48 526.0h2M22 530.0h2M34 530.0h2M20 534.0h2M50 534.0h2M54 534.0h4M20 538.0h2M30 538.0h2M52 538.0h4M8 542.0h2M22 550.0h2M42 550.0h2M46 550.0h2M20 554.0h2M58 554.0h4M18 558.0h4M30 558.0h2M38 558.0h2M54 558.0h2M24 566.0h2M34 566.0h2M56 566.0h4M62 566.0h8M84 566.0h4M94 566.0h2M104 566.0h2M22 570.0h2M32 570.0h6M62 570.0h4M76 570.0h6M96 570.0h4M102 570.0h4M128 570.0h2M140 570.0h4M146 570.0h2M40 574.0h2M50 574.0h2M58 574.0h2M68 574.0h2M90 574.0h2M102 574.0h2M114 574.0h2M16 578.0h2M12 582.0h4M24 590.0h2M34 590.0h2M44 590.0h2M56 590.0h4M74 590.0h4M84 590.0h2M94 590.0h2M36 594.0h2M46 594.0h2M54 594.0h2M64 594.0h2M86 594.0h2M98 594.0h2M110 594.0h2M12 598.0h4M8 602.0h2M46 610.0h2M66 610.0h2M70 610.0h2M8 614.0h2M44 622.0h4M50 622.0h2M8 626.0h2M50 634.0h4M56 634.0h2M20 638.0h2M58 638.0h4M8 642.0h2M46 650.0h4M52 650.0h2M20 654.0h2M48 654.0h2M64 654.0h6M80 654.0h2M98 654.0h4M110 654.0h2M22 658.0h4M34 658.0h2M42 658.0h2M58 658.0h2M24 662.0h2M32 662.0h2M48 662.0h2M88 662.0h2M100 662.0h2M118 662.0h2M12 666.0h4M20 670.0h2M50 670.0h2M54 670.0h4M8 674.0h2M22 682.0h4M28 682.0h2M24 686.0h2M44 686.0h2M96 686.0h2M100 686.0h2M112 686.0h2M36 690.0h2M40 690.0h2M22 694.0h2M34 694.0h2M12 698.0h2M18 702.0h2M66 702.0h2M80 702.0h2M130 702.0h2M52 706.0h2M58 706.0h2M72 706.0h2M92 706.0h2M8 710.0h2M4 714.0h2M28 718.0h2M50 718.0h4M64 718.0h2M74 718.0h2M84 718.0h2M18 722.0h2M46 722.0h2M58 722.0h2M62 722.0h2M66 722.0h6M82 722.0h2M106 722.0h2M118 722.0h4M4 726.0h4M0 730.0h2" stroke="#d4d4d4" stroke-width="2.6" stroke-dasharray="1.6 0.4" fill="none"/><path d="M32 18.0h18M54 18.0h26M12 30.0h2M32 30.0h26M18 50.0h24M46 50.0h4M54 50.0h18M76 50.0h10M16 54.0h18M62 54.0h4M68 54.0h18M16 58.0h26M50 58.0h18M70 58.0h18M96 58.0h18M12 62.0h36M56 62.0h10M68 62.0h18M94 62.0h10M12 66.0h30M4 74.0h18M40 74.0h18M16 78.0h36M70 78.0h18M12 82.0h30M54 82.0h18M12 86.0h36M54 86.0h36M106 86.0h8M122 86.0h8M140 86.0h18M30 90.0h26M74 90.0h18M12 94.0h30M54 94.0h18M4 110.0h30M48 110.0h30M88 110.0h36M18 118.0h30M18 130.0h22M44 130.0h6M54 130.0h6M64 130.0h6M34 134.0h6M8 142.0h6M16 142.0h10M52 142.0h6M62 142.0h6M8 150.0h6M16 150.0h10M28 150.0h6M42 150.0h6M18 166.0h20M42 166.0h6M52 166.0h8M64 166.0h14M82 166.0h18M104 166.0h10M16 170.0h6M28 170.0h6M36 170.0h6M44 170.0h14M16 174.0h6M28 174.0h10M40 174.0h14M16 178.0h14M36 178.0h18M60 178.0h18M80 178.0h14M12 186.0h14M12 198.0h14M8 202.0h6M16 202.0h18M40 202.0h18M42 206.0h6M52 206.0h18M74 206.0h10M16 210.0h6M12 222.0h14M30 226.0h6M12 230.0h6M46 230.0h14M64 230.0h6M18 242.0h6M12 246.0h6M52 246.0h14M16 262.0h18M34 266.0h14M16 270.0h6M24 270.0h10M36 270.0h14M38 278.0h16M62 278.0h14M44 282.0h6M54 282.0h16M30 302.0h16M54 302.0h6M36 306.0h6M46 306.0h16M66 306.0h6M74 306.0h16M12 322.0h8M16 326.0h14M12 330.0h6M20 330.0h22M48 330.0h6M16 342.0h14M12 346.0h6M20 346.0h24M50 346.0h6M16 358.0h14M12 362.0h6M20 362.0h32M58 362.0h6M26 378.0h6M70 378.0h14M102 378.0h4M108 378.0h2M112 378.0h2M20 382.0h10M36 382.0h14M16 386.0h4M26 386.0h6M16 398.0h8M64 398.0h10M12 402.0h4M42 402.0h2M24 406.0h2M20 410.0h6M74 410.0h18M8 430.0h6M16 430.0h26M56 430.0h10M70 430.0h4M22 434.0h6M64 434.0h10M78 434.0h4M26 446.0h6M80 446.0h6M8 450.0h6M16 450.0h14M38 450.0h6M26 462.0h6M16 466.0h6M12 470.0h6M20 470.0h14M26 474.0h6M16 478.0h14M16 482.0h6M8 494.0h6M16 494.0h14M22 498.0h6M62 498.0h14M4 506.0h6M12 506.0h14M34 506.0h6M12 518.0h40M16 522.0h10M56 522.0h18M8 526.0h22M34 526.0h10M24 530.0h10M22 534.0h26M22 538.0h6M8 550.0h12M24 550.0h18M32 558.0h6M40 558.0h14M36 566.0h18M88 566.0h6M24 570.0h6M68 570.0h6M106 570.0h6M130 570.0h10M62 574.0h6M72 574.0h18M104 574.0h10M46 590.0h10M78 590.0h6M58 594.0h6M68 594.0h18M100 594.0h10M8 610.0h36M48 610.0h18M8 622.0h34M8 634.0h40M8 650.0h36M22 654.0h26M70 654.0h10M84 654.0h14M36 658.0h6M44 658.0h14M26 662.0h6M34 662.0h14M90 662.0h10M104 662.0h14M22 670.0h26M8 682.0h12M28 686.0h16M48 686.0h46M114 686.0h10M24 690.0h10M16 694.0h6M36 694.0h6M20 702.0h46M70 702.0h10M82 702.0h46M134 702.0h46M62 706.0h10M76 706.0h16M54 718.0h10M68 718.0h6M48 722.0h10M72 722.0h10M86 722.0h20M110 722.0h6M30 738.0h40" stroke="#88deff" stroke-width="2.6" stroke-dasharray="1.6 0.4" fill="none"/><path d="M96 18.0h14M40 38.0h46M134 58.0h4M154 58.0h6M124 62.0h4M144 62.0h6M60 118.0h6M36 186.0h20M64 198.0h22M36 222.0h14M46 226.0h16M58 266.0h16M56 270.0h4M74 282.0h4M40 326.0h22M40 342.0h24M40 358.0h32M42 378.0h20M84 398.0h16M42 446.0h16M96 446.0h16M42 462.0h18M40 570.0h20M84 570.0h10" stroke="#d98e73" stroke-width="2.6" stroke-dasharray="1.6 0.4" fill="none"/><path d="M0 30.0h10M0 38.0h10M0 50.0h16M4 54.0h10M4 58.0h10M116 58.0h10M4 62.0h6M106 62.0h10M4 66.0h6M60 74.0h4M116 86.0h4M0 130.0h16M0 166.0h16M4 170.0h10M4 174.0h10M4 178.0h10M102 178.0h18M16 226.0h12M20 266.0h12M26 278.0h10M56 278.0h4M18 302.0h10M48 302.0h4M12 378.0h12M8 382.0h10M8 386.0h6M22 402.0h16M28 406.0h20M40 410.0h8M12 446.0h12M66 446.0h12M12 462.0h12M42 470.0h8M38 494.0h10M0 518.0h10M64 518.0h4M4 522.0h10M28 522.0h14M12 534.0h8M12 538.0h8M12 554.0h8M22 558.0h8M98 566.0h4M114 570.0h4M120 570.0h8M42 574.0h8M94 574.0h8M36 590.0h8M88 590.0h4M38 594.0h8M90 594.0h8M12 638.0h8M12 654.0h8M104 654.0h4M26 658.0h8M16 662.0h8M12 670.0h8M12 686.0h10M104 686.0h8M12 690.0h10M26 694.0h8M78 718.0h4" stroke="#389edb" stroke-width="2.6" stroke-dasharray="1.6 0.4" fill="none"/><path d="M12 38.0h22M30 322.0h22M34 398.0h22M58 518.0h4M54 574.0h4M50 594.0h4M54 706.0h4" stroke="#00c4ff" stroke-width="2.6" stroke-dasharray="1.6 0.4" fill="none"/><path d="M52 54.0h8M142 58.0h10M132 62.0h10M24 74.0h14M54 78.0h14M44 82.0h8M92 86.0h12M58 90.0h14M44 94.0h8M50 118.0h8M24 134.0h8M28 142.0h22M28 198.0h22M16 206.0h24M20 230.0h24M20 246.0h30M20 282.0h22M12 306.0h22M86 378.0h10M52 382.0h12M72 382.0h22M28 410.0h10M64 410.0h8M44 430.0h8M30 434.0h32M34 474.0h24M30 498.0h30M12 530.0h10M34 538.0h18M22 554.0h36M26 566.0h8M70 566.0h14M20 574.0h20M26 590.0h8M60 590.0h14M16 594.0h20M22 638.0h36M50 654.0h14M50 662.0h38M26 706.0h26M30 718.0h20M20 722.0h26" stroke="#dcdca4" stroke-width="2.6" stroke-dasharray="1.6 0.4" fill="none"/><path d="M98 78.0h2M106 90.0h2M66 382.0h2" stroke="#afcfa4" stroke-width="2.6" stroke-dasharray="1.6 0.4" fill="none"/></g></svg>
<div style="position:absolute;left:3806.00px;top:178.80px;width:2.00px;height:1879.20px;background:rgba(127,127,127,0.3);"></div>
<div style="position:absolute;left:3806.40px;top:178.80px;width:33.60px;height:314.50px;background:rgba(121,121,121,0.4);"></div>
<div style="position:absolute;left:3806.40px;top:548.00px;width:33.60px;height:4.80px;background:#a0a0a0;"></div>
<svg style="position:absolute;left:36.00px;top:2064.00px;" width="34" height="42" viewBox="0 0 34 42"><g fill="none" stroke="#ffffff" stroke-width="2.6">
<circle cx="9" cy="9.5" r="4.5"/><circle cx="24" cy="15" r="4.5"/><circle cx="9" cy="33" r="4.5"/>
<path d="M9 14 V28.5"/><path d="M24 19.5 Q24 25 17 25 H14 Q9 25 9 28.5"/></g></svg>
<div style="position:absolute;left:77.00px;top:2070.43px;font-family:'Liberation Sans', sans-serif;font-size:28.8px;line-height:32.18px;color:#ffffff;font-weight:normal;font-style:normal;letter-spacing:1.150px;white-space:pre;;-webkit-text-stroke:0.6px">fix-component-reactify-wc</div>
<svg style="position:absolute;left:472.00px;top:2068.00px;" width="36" height="30" viewBox="0 0 36 30"><g fill="none" stroke="#ffffff" stroke-width="2.6" stroke-linejoin="round">
<path d="M10 22 H8 Q2 22 2 16 Q2 10.5 8 10 Q9 3 17 3 Q24.5 3 26 9.5 Q33 10 33 16 Q33 22 27 22 H25"/>
<path d="M17.5 27.5 V13 M12 18 L17.5 12.5 L23 18"/></g></svg>
<svg style="position:absolute;left:544.00px;top:2066.00px;" width="34" height="34" viewBox="0 0 34 34"><g fill="none" stroke="#ffffff" stroke-width="2.6"><circle cx="17" cy="17" r="13"/><path d="M11.5 11.5 L22.5 22.5 M22.5 11.5 L11.5 22.5"/></g></svg>
<div style="position:absolute;left:585.50px;top:2070.43px;font-family:'Liberation Sans', sans-serif;font-size:28.8px;line-height:32.18px;color:#ffffff;font-weight:normal;font-style:normal;letter-spacing:0.000px;white-space:pre;;-webkit-text-stroke:0.6px">0</div>
<svg style="position:absolute;left:611.00px;top:2066.00px;" width="35" height="33" viewBox="0 0 35 33"><g fill="none" stroke="#ffffff" stroke-width="2.6" stroke-linejoin="round"><path d="M17.5 3 L32.5 29.5 H2.5 Z"/><path d="M17.5 11 V21"/></g><circle cx="17.5" cy="25" r="1.6" fill="#ffffff"/></svg>
<div style="position:absolute;left:652.50px;top:2070.43px;font-family:'Liberation Sans', sans-serif;font-size:28.8px;line-height:32.18px;color:#ffffff;font-weight:normal;font-style:normal;letter-spacing:0.000px;white-space:pre;;-webkit-text-stroke:0.6px">0</div>
<svg style="position:absolute;left:714.00px;top:2064.00px;" width="26" height="42" viewBox="0 0 26 42"><g fill="none" stroke="#ffffff" stroke-width="2.6"><circle cx="13" cy="20.5" r="6.5"/><path d="M13 2 V14 M13 27 V40"/></g></svg>
<div style="position:absolute;left:750.00px;top:2070.43px;font-family:'Liberation Sans', sans-serif;font-size:28.8px;line-height:32.18px;color:#ffffff;font-weight:normal;font-style:normal;letter-spacing:0.000px;white-space:pre;;-webkit-text-stroke:0.6px">Blame CodeDaraW ( 7 days ago )</div>
<div style="position:absolute;left:2782.00px;top:2070.43px;font-family:'Liberation Sans', sans-serif;font-size:28.8px;line-height:32.18px;color:#ffffff;font-weight:normal;font-style:normal;letter-spacing:0.168px;white-space:pre;;-webkit-text-stroke:0.6px">Ln 45, Col 61</div>
<div style="position:absolute;left:2994.00px;top:2070.43px;font-family:'Liberation Sans', sans-serif;font-size:28.8px;line-height:32.18px;color:#ffffff;font-weight:normal;font-style:normal;letter-spacing:0.236px;white-space:pre;;-webkit-text-stroke:0.6px">Spaces: 2</div>
<div style="position:absolute;left:3163.00px;top:2070.43px;font-family:'Liberation Sans', sans-serif;font-size:28.8px;line-height:32.18px;color:#ffffff;font-weight:normal;font-style:normal;letter-spacing:0.941px;white-space:pre;;-webkit-text-stroke:0.6px">UTF-8</div>
<div style="position:absolute;left:3287.00px;top:2070.43px;font-family:'Liberation Sans', sans-serif;font-size:28.8px;line-height:32.18px;color:#ffffff;font-weight:normal;font-style:normal;letter-spacing:-0.255px;white-space:pre;;-webkit-text-stroke:0.6px">LF</div>
<div style="position:absolute;left:3358.00px;top:2070.43px;font-family:'Liberation Sans', sans-serif;font-size:28.8px;line-height:32.18px;color:#ffffff;font-weight:normal;font-style:normal;letter-spacing:0.406px;white-space:pre;;-webkit-text-stroke:0.6px">JavaScript</div>
<div style="position:absolute;left:3576.00px;top:2070.43px;font-family:'Liberation Sans', sans-serif;font-size:28.8px;line-height:32.18px;color:#ffffff;font-weight:normal;font-style:normal;letter-spacing:-0.143px;white-space:pre;;-webkit-text-stroke:0.6px">ESLint</div>
<svg style="position:absolute;left:3532.00px;top:2070.00px;" width="36" height="28" viewBox="0 0 36 28"><g fill="none" stroke="#ffffff" stroke-width="2.4"><path d="M2 15 L8 22 L22 4 M13 19.5 L16 22 L33 3"/></g></svg>
<svg style="position:absolute;left:3698.00px;top:2068.00px;" width="34" height="34" viewBox="0 0 34 34"><g fill="none" stroke="#ffffff" stroke-width="2.4" stroke-linejoin="round">
<circle cx="11" cy="13" r="6.5"/><path d="M2 31 Q3 21.5 11 21 Q17 21 19.5 26"/><path d="M15 3 H31 V17 H23 L19 21"/><path d="M21 11 L23.5 13.5 L28 8"/></g></svg>
<svg style="position:absolute;left:3772.00px;top:2066.00px;" width="34" height="36" viewBox="0 0 34 36"><g fill="none" stroke="#ffffff" stroke-width="2.4" stroke-linejoin="round">
<path d="M4 27 H28 L25 22.5 V15 Q25 6.5 16 6.5 Q7 6.5 7 15 V22.5 Z"/><path d="M12.5 30.5 Q16 34 19.5 30.5"/></g>
<circle cx="23.7" cy="10.8" r="6.4" fill="#ffffff"/></svg>
<div style="position:absolute;left:3837.50px;top:0.00px;width:2.50px;height:2112.00px;background:rgba(120,120,120,0.55);"></div>
<div style="position:absolute;left:0.00px;top:2109.50px;width:3840.00px;height:2.50px;background:rgba(255,255,255,0.2);"></div>
</div></body></html>
